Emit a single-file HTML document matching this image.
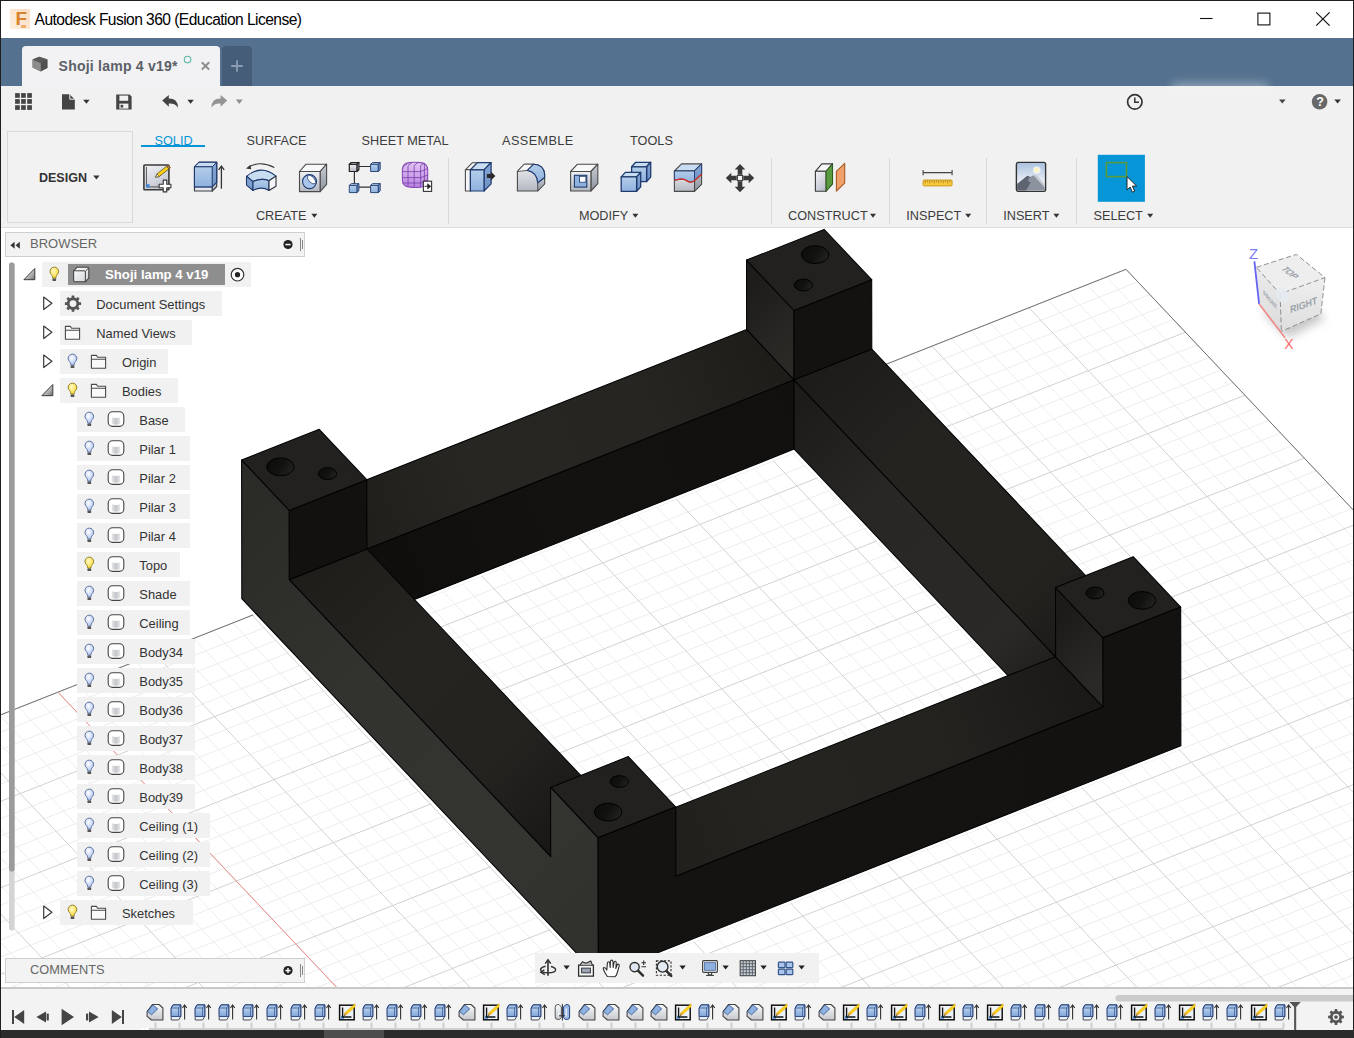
<!DOCTYPE html><html><head><meta charset="utf-8"><title>Autodesk Fusion 360 (Education License)</title><style>
*{box-sizing:border-box;margin:0;padding:0}
html,body{width:1354px;height:1038px;overflow:hidden;background:#fff}
body{font-family:"Liberation Sans",sans-serif;position:relative;color:#333}
.abs{position:absolute}
.t{position:absolute;white-space:nowrap;line-height:1}
#title{left:0;top:0;width:1354px;height:38px;background:#fff}
#tabbar{left:0;top:38px;width:1354px;height:48px;background:#54728f}
#tab{left:22px;top:8px;width:198px;height:40px;background:#f2f2f4;border-radius:4px 4px 0 0}
#plus{left:222px;top:8px;width:30px;height:40px;background:#455d79;border-radius:4px 4px 0 0}
#qat{left:0;top:86px;width:1354px;height:34px;background:#f1f1f1}
#ribbon{left:0;top:120px;width:1354px;height:108px;background:#f1f1f1;border-bottom:1px solid #dcdcdc}
.rt{font-size:12.7px;color:#3c3c3c}
.sep{position:absolute;top:158px;width:1px;height:66px;background:#d9d9d9}
#canvas{left:0;top:228px;width:1354px;height:759px;overflow:hidden;background:#fff}
.row{position:absolute;height:24px;background:#f1f1f1}
.rowt{position:absolute;font-size:12.9px;color:#333;white-space:nowrap;line-height:1}
.hdr{position:absolute;left:5px;width:300px;height:24px;background:#f3f3f3;border:1px solid #cfcfcf}
#timeline{left:0;top:987px;width:1354px;height:43px;background:#f3f3f3;border-top:2px solid #c8c8c8}
#taskbar{left:0;top:1030px;width:1354px;height:8px;background:#2b2b2b}
</style></head><body>
<div id="canvas" class="abs"><svg class="abs" style="left:0;top:-228px" width="1354" height="1038" viewBox="0 0 1354 1038">
<path d="M-1013.7 1133.8L1137.9 281.9M-1001.9 1146.4L1149.8 294.5M-990.0 1159.0L1161.7 307.1M-978.1 1171.6L1173.6 319.6M-954.3 1196.8L1197.3 344.8M-942.4 1209.4L1209.2 357.4M-930.5 1222.0L1221.1 370.0M-918.7 1234.6L1233.0 382.6M-894.9 1259.7L1256.8 407.8M-883.0 1272.3L1268.7 420.4M-871.1 1284.9L1280.5 433.0M-859.2 1297.5L1292.4 445.5M-835.5 1322.7L1316.2 470.7M-823.6 1335.3L1328.1 483.3M-811.7 1347.9L1340.0 495.9M-799.8 1360.5L1351.9 508.5M-776.0 1385.6L1375.6 533.7M-764.1 1398.2L1387.5 546.3M-752.2 1410.8L1399.4 558.9M-740.4 1423.4L1411.3 571.4M-716.6 1448.6L1435.1 596.6M-704.7 1461.2L1446.9 609.2M-692.8 1473.8L1458.8 621.8M-680.9 1486.3L1470.7 634.4M-657.2 1511.5L1494.5 659.6M-645.3 1524.1L1506.4 672.2M-633.4 1536.7L1518.3 684.8M-621.5 1549.3L1530.2 697.3M-597.7 1574.5L1553.9 722.5M-585.8 1587.1L1565.8 735.1M-573.9 1599.7L1577.7 747.7M-562.1 1612.2L1589.6 760.3M-538.3 1637.4L1613.4 785.5M-526.4 1650.0L1625.2 798.1M-514.5 1662.6L1637.1 810.7M-502.6 1675.2L1649.0 823.2M-478.9 1700.4L1672.8 848.4M-467.0 1713.0L1684.7 861.0M-455.1 1725.6L1696.6 873.6M-443.2 1738.1L1708.5 886.2M-419.4 1763.3L1732.2 911.4M-407.5 1775.9L1744.1 924.0M-395.7 1788.5L1756.0 936.6M-383.8 1801.1L1767.9 949.1M-360.0 1826.3L1791.7 974.3M-348.1 1838.9L1803.5 986.9M-336.2 1851.5L1815.4 999.5M-324.3 1864.0L1827.3 1012.1M-300.6 1889.2L1851.1 1037.3M-288.7 1901.8L1863.0 1049.9M-276.8 1914.4L1874.9 1062.4M-264.9 1927.0L1886.7 1075.0M-241.1 1952.2L1910.5 1100.2M-229.2 1964.8L1922.4 1112.8M-217.4 1977.4L1934.3 1125.4M-205.5 1989.9L1946.2 1138.0M-181.7 2015.1L1970.0 1163.2M-169.8 2027.7L1981.8 1175.8M-157.9 2040.3L1993.7 1188.3M-146.0 2052.9L2005.6 1200.9M-122.3 2078.1L2029.4 1226.1M-110.4 2090.7L2041.3 1238.7M-98.5 2103.3L2053.2 1251.3M-86.6 2115.8L2065.0 1263.9M-62.8 2141.0L2088.8 1289.1M-50.9 2153.6L2100.7 1301.7M1106.6 277.0L2090.8 1319.4M1087.2 284.7L2071.4 1327.1M1067.8 292.4L2052.0 1334.8M1048.3 300.0L2032.5 1342.5M1009.5 315.4L1993.7 1357.9M990.1 323.1L1974.3 1365.6M970.7 330.8L1954.9 1373.2M951.2 338.5L1935.4 1380.9M912.4 353.9L1896.6 1396.3M893.0 361.6L1877.2 1404.0M873.6 369.2L1857.8 1411.7M854.1 376.9L1838.3 1419.4M815.3 392.3L1799.5 1434.8M795.9 400.0L1780.1 1442.4M776.5 407.7L1760.7 1450.1M757.0 415.4L1741.2 1457.8M718.2 430.8L1702.4 1473.2M698.8 438.4L1683.0 1480.9M679.4 446.1L1663.6 1488.6M660.0 453.8L1644.2 1496.3M621.1 469.2L1605.3 1511.6M601.7 476.9L1585.9 1519.3M582.3 484.6L1566.5 1527.0M562.9 492.3L1547.1 1534.7M524.0 507.7L1508.2 1550.1M504.6 515.3L1488.8 1557.8M485.2 523.0L1469.4 1565.5M465.8 530.7L1450.0 1573.2M426.9 546.1L1411.1 1588.5M407.5 553.8L1391.7 1596.2M388.1 561.5L1372.3 1603.9M368.7 569.2L1352.9 1611.6M329.8 584.5L1314.0 1627.0M310.4 592.2L1294.6 1634.7M291.0 599.9L1275.2 1642.4M271.6 607.6L1255.8 1650.1M232.7 623.0L1216.9 1665.4M213.3 630.7L1197.5 1673.1M193.9 638.4L1178.1 1680.8M174.5 646.1L1158.7 1688.5M135.6 661.4L1119.8 1703.9M116.2 669.1L1100.4 1711.6M96.8 676.8L1081.0 1719.3M77.4 684.5L1061.6 1726.9M38.5 699.9L1022.7 1742.3M19.1 707.6L1003.3 1750.0M-0.3 715.3L983.9 1757.7M-19.7 722.9L964.5 1765.4M-58.6 738.3L925.6 1780.8M-78.0 746.0L906.2 1788.5M-97.4 753.7L886.8 1796.1M-116.8 761.4L867.4 1803.8M-155.7 776.8L828.5 1819.2M-175.1 784.5L809.1 1826.9M-194.5 792.1L789.7 1834.6M-213.9 799.8L770.3 1842.3M-252.8 815.2L731.4 1857.7M-272.2 822.9L712.0 1865.3M-291.6 830.6L692.6 1873.0M-311.0 838.3L673.2 1880.7M-349.8 853.7L634.4 1896.1M-369.3 861.4L614.9 1903.8M-388.7 869.0L595.5 1911.5M-408.1 876.7L576.1 1919.2M-446.9 892.1L537.3 1934.5M-466.4 899.8L517.8 1942.2M-485.8 907.5L498.4 1949.9M-505.2 915.2L479.0 1957.6M-544.0 930.6L440.2 1973.0M-563.5 938.2L420.7 1980.7M-582.9 945.9L401.3 1988.4M-602.3 953.6L381.9 1996.1M-641.1 969.0L343.1 2011.4M-660.6 976.7L323.6 2019.1M-680.0 984.4L304.2 2026.8M-699.4 992.1L284.8 2034.5M-738.2 1007.4L246.0 2049.9M-757.6 1015.1L226.5 2057.6M-777.1 1022.8L207.1 2065.3M-796.5 1030.5L187.7 2073.0M-835.3 1045.9L148.9 2088.3M-854.7 1053.6L129.5 2096.0M-874.2 1061.3L110.0 2103.7M-893.6 1069.0L90.6 2111.4M-932.4 1084.3L51.8 2126.8M-951.8 1092.0L32.4 2134.5M-971.3 1099.7L12.9 2142.2M-990.7 1107.4L-6.5 2149.8" stroke="#ededed" stroke-width="1" fill="none"/>
<path d="M-1025.6 1121.2L1126.0 269.3M-966.2 1184.2L1185.4 332.2M-906.8 1247.1L1244.9 395.2M-847.3 1310.1L1304.3 458.1M-787.9 1373.0L1363.7 521.1M-728.5 1436.0L1423.2 584.0M-669.0 1498.9L1482.6 647.0M-609.6 1561.9L1542.0 709.9M-550.2 1624.8L1601.5 772.9M-490.7 1687.8L1660.9 835.8M-431.3 1750.7L1720.3 898.8M-371.9 1813.7L1779.8 961.7M-312.4 1876.6L1839.2 1024.7M-253.0 1939.6L1898.6 1087.6M-193.6 2002.5L1958.1 1150.6M-134.2 2065.5L2017.5 1213.5M-74.7 2128.4L2076.9 1276.5M1126.0 269.3L2110.2 1311.7M1028.9 307.7L2013.1 1350.2M931.8 346.2L1916.0 1388.6M834.7 384.6L1818.9 1427.1M737.6 423.1L1721.8 1465.5M640.5 461.5L1624.7 1504.0M543.4 500.0L1527.6 1542.4M446.3 538.4L1430.5 1580.8M349.2 576.9L1333.4 1619.3M252.1 615.3L1236.3 1657.7M155.1 653.7L1139.3 1696.2M58.0 692.2L1042.2 1734.6M-39.1 730.6L945.1 1773.1M-136.2 769.1L848.0 1811.5M-233.3 807.5L750.9 1850.0M-330.4 846.0L653.8 1888.4M-427.5 884.4L556.7 1926.9M-524.6 922.9L459.6 1965.3M-621.7 961.3L362.5 2003.8M-718.8 999.8L265.4 2042.2M-815.9 1038.2L168.3 2080.6M-913.0 1076.6L71.2 2119.1M-1010.1 1115.1L-25.9 2157.5" stroke="#d2d2d2" stroke-width="1" fill="none"/>
<path d="M-1025.6 1121.2L1126.0 269.3L2110.2 1311.7" stroke="#747474" stroke-width="1" fill="none"/>
<path d="M58.0 692.2L1042.2 1734.6" stroke="#f08c8c" stroke-width="1" fill="none"/>
<defs><linearGradient id="gOL" gradientUnits="userSpaceOnUse" x1="241.7" y1="529.4" x2="598.3" y2="907.1"><stop offset="0" stop-color="#2b2b28"/><stop offset="0.35" stop-color="#32322f"/><stop offset="0.8" stop-color="#343431"/><stop offset="1" stop-color="#31312e"/></linearGradient><linearGradient id="gOR" gradientUnits="userSpaceOnUse" x1="598.3" y1="907.1" x2="1180.8" y2="676.4"><stop offset="0" stop-color="#141311"/><stop offset="1" stop-color="#131210"/></linearGradient><linearGradient id="gInA" gradientUnits="userSpaceOnUse" x1="366.9" y1="583.6" x2="794.2" y2="414.4"><stop offset="0" stop-color="#0f0e0d"/><stop offset="0.5" stop-color="#131211"/><stop offset="1" stop-color="#11100f"/></linearGradient><linearGradient id="gInB" gradientUnits="userSpaceOnUse" x1="794.2" y1="414.4" x2="1055.7" y2="691.4"><stop offset="0" stop-color="#1d1c1a"/><stop offset="0.3" stop-color="#282725"/><stop offset="0.8" stop-color="#2a2927"/><stop offset="1" stop-color="#1c1b19"/></linearGradient><linearGradient id="gTopLB" gradientUnits="userSpaceOnUse" x1="343.1" y1="523.8" x2="770.3" y2="354.6"><stop offset="0" stop-color="#1f1e1b"/><stop offset="0.3" stop-color="#272623"/><stop offset="0.7" stop-color="#262522"/><stop offset="1" stop-color="#1e1d1a"/></linearGradient><linearGradient id="gTopBR" gradientUnits="userSpaceOnUse" x1="832.9" y1="364.4" x2="1094.4" y2="641.4"><stop offset="0" stop-color="#1d1c1a"/><stop offset="0.3" stop-color="#242320"/><stop offset="0.8" stop-color="#23221f"/><stop offset="1" stop-color="#191816"/></linearGradient><linearGradient id="gTopRF" gradientUnits="userSpaceOnUse" x1="1079.4" y1="682.0" x2="652.2" y2="851.1"><stop offset="0" stop-color="#1a1917"/><stop offset="0.3" stop-color="#23221f"/><stop offset="0.7" stop-color="#252421"/><stop offset="1" stop-color="#201f1c"/></linearGradient><linearGradient id="gTopFL" gradientUnits="userSpaceOnUse" x1="328.0" y1="564.3" x2="589.5" y2="841.3"><stop offset="0" stop-color="#1f1e1b"/><stop offset="0.3" stop-color="#252421"/><stop offset="0.7" stop-color="#23221f"/><stop offset="1" stop-color="#161514"/></linearGradient><linearGradient id="gPv" gradientUnits="userSpaceOnUse" x1="746.5" y1="294.8" x2="794.1" y2="345.1"><stop offset="0" stop-color="#1e1d1b"/><stop offset="1" stop-color="#2a2926"/></linearGradient><linearGradient id="gPvR" gradientUnits="userSpaceOnUse" x1="1055.6" y1="622.1" x2="1103.1" y2="672.5"><stop offset="0" stop-color="#1c1b19"/><stop offset="1" stop-color="#2a2927"/></linearGradient><linearGradient id="gHole" x1="0" y1="0.2" x2="1" y2="0.6"><stop offset="0" stop-color="#0c0c0b"/><stop offset="0.55" stop-color="#121211"/><stop offset="0.85" stop-color="#1d1d1b"/><stop offset="1" stop-color="#232321"/></linearGradient></defs>
<polygon points="241.8,598.7 598.4,976.3 1180.9,745.7 824.3,368.0" fill="none" stroke="#fff" stroke-opacity="0.85" stroke-width="6" stroke-linejoin="round"/>
<polygon points="367.0,618.3 628.5,895.2 1055.7,726.1 794.2,449.1" fill="none" stroke="#fff" stroke-opacity="0.85" stroke-width="6" stroke-linejoin="round"/>
<polygon points="366.9,549.0 794.1,379.8 794.2,449.1 367.0,618.3" fill="url(#gInA)" stroke="#020202" stroke-width="1.05" stroke-linejoin="round"/>
<polygon points="794.1,379.8 1055.6,656.8 1055.7,726.1 794.2,449.1" fill="url(#gInB)" stroke="#020202" stroke-width="1.05" stroke-linejoin="round"/>
<polygon points="319.3,498.6 746.6,329.4 794.1,379.8 366.9,549.0" fill="url(#gTopLB)" stroke="#020202" stroke-width="1.05" stroke-linejoin="round"/>
<polygon points="794.1,379.8 871.8,349.0 1133.3,626.0 1055.6,656.8" fill="url(#gTopBR)" stroke="#020202" stroke-width="1.05" stroke-linejoin="round"/>
<polygon points="1055.6,656.8 1103.2,707.1 675.9,876.3 628.4,825.9" fill="url(#gTopRF)" stroke="#020202" stroke-width="1.05" stroke-linejoin="round"/>
<polygon points="289.2,579.7 366.9,549.0 628.4,825.9 550.7,856.7" fill="url(#gTopFL)" stroke="#020202" stroke-width="1.05" stroke-linejoin="round"/>
<polygon points="746.5,260.1 794.0,310.5 794.1,379.8 746.6,329.4" fill="url(#gPv)" stroke="#020202" stroke-width="1.05" stroke-linejoin="round"/>
<polygon points="794.0,310.5 871.7,279.7 871.8,349.0 794.1,379.8" fill="#131210" stroke="#020202" stroke-width="1.05" stroke-linejoin="round"/>
<polygon points="746.5,260.1 824.1,229.4 871.7,279.7 794.0,310.5" fill="#22211f" stroke="#020202" stroke-width="1.05" stroke-linejoin="round"/>
<polygon points="289.1,510.4 366.8,479.7 366.9,549.0 289.2,579.7" fill="#121110" stroke="#020202" stroke-width="1.05" stroke-linejoin="round"/>
<polygon points="241.6,460.1 319.2,429.3 366.8,479.7 289.1,510.4" fill="#22211f" stroke="#020202" stroke-width="1.05" stroke-linejoin="round"/>
<polygon points="1055.5,587.5 1103.0,637.8 1103.2,707.1 1055.6,656.8" fill="url(#gPvR)" stroke="#020202" stroke-width="1.05" stroke-linejoin="round"/>
<polygon points="1055.5,587.5 1133.2,556.7 1180.7,607.1 1103.0,637.8" fill="#22211f" stroke="#020202" stroke-width="1.05" stroke-linejoin="round"/>
<polygon points="550.6,787.4 628.3,756.6 675.8,807.0 598.1,837.8" fill="#22211f" stroke="#020202" stroke-width="1.05" stroke-linejoin="round"/>
<polygon points="241.8,598.7 241.6,460.1 289.1,510.4 289.2,579.7 550.7,856.7 550.6,787.4 598.1,837.8 598.4,976.3" fill="url(#gOL)" stroke="#020202" stroke-width="1.05" stroke-linejoin="round"/>
<polygon points="598.4,976.3 598.1,837.8 675.8,807.0 675.9,876.3 1103.2,707.1 1103.0,637.8 1180.7,607.1 1180.9,745.7" fill="url(#gOR)" stroke="#020202" stroke-width="1.05" stroke-linejoin="round"/>
<ellipse cx="280.4" cy="466.8" rx="13.7" ry="8.9" fill="url(#gHole)" stroke="#000" stroke-width="1"/>
<ellipse cx="327.5" cy="473.6" rx="9.1" ry="5.9" fill="url(#gHole)" stroke="#000" stroke-width="1"/>
<ellipse cx="815.1" cy="254.6" rx="13.7" ry="8.9" fill="url(#gHole)" stroke="#000" stroke-width="1"/>
<ellipse cx="803.4" cy="285.0" rx="9.1" ry="5.9" fill="url(#gHole)" stroke="#000" stroke-width="1"/>
<ellipse cx="1094.9" cy="593.0" rx="9.1" ry="5.9" fill="url(#gHole)" stroke="#000" stroke-width="1"/>
<ellipse cx="1142.0" cy="600.4" rx="13.7" ry="8.9" fill="url(#gHole)" stroke="#000" stroke-width="1"/>
<ellipse cx="619.3" cy="781.5" rx="9.1" ry="5.9" fill="url(#gHole)" stroke="#000" stroke-width="1"/>
<ellipse cx="608.1" cy="812.1" rx="13.7" ry="8.9" fill="url(#gHole)" stroke="#000" stroke-width="1"/>
<defs><filter id="cbl" x="-50%" y="-50%" width="200%" height="200%"><feGaussianBlur stdDeviation="5"/></filter><linearGradient id="cgR" x1="0" y1="0" x2="0" y2="1"><stop offset="0" stop-color="#efefef"/><stop offset="1" stop-color="#dedede"/></linearGradient><linearGradient id="cgL" x1="0" y1="0" x2="0" y2="1"><stop offset="0" stop-color="#ebebeb"/><stop offset="1" stop-color="#dcdcdc"/></linearGradient></defs>
<polygon points="1262.0,312.0 1300.0,300.0 1326.0,318.0 1288.0,338.0" fill="#9a9a9a" opacity="0.55" filter="url(#cbl)"/>
<polygon points="1256.3,267.3 1296.4,254.4 1325.0,277.6 1280.1,293.9" fill="#eeeeee"/>
<polygon points="1256.3,267.3 1280.1,293.9 1281.4,331.4 1259.1,303.9" fill="url(#cgL)"/>
<polygon points="1280.1,293.9 1325.0,277.6 1320.8,313.9 1281.4,331.4" fill="url(#cgR)"/>
<path d="M1256.3 267.3L1296.4 254.4L1325.0 277.6L1280.1 293.9Z M1280.1 293.9L1281.4 331.4 M1325.0 277.6L1320.8 313.9L1281.4 331.4" stroke="#858585" stroke-width="0.9" stroke-dasharray="5.2 2.6" fill="none"/>
<polygon points="1276.0,290.5 1283.5,287.5 1288.5,293.0 1288.0,300.0 1281.0,302.5 1276.5,297.0" fill="#e6eaf2" opacity="0.9"/>
<text transform="matrix(0.2860 0.2320 -0.4010 0.1290 1296.40 254.40)" x="50" y="60" font-size="25" textLength="44" lengthAdjust="spacingAndGlyphs" font-weight="bold" fill="#9ca1aa" text-anchor="middle" font-family="Liberation Sans, sans-serif">TOP</text>
<text transform="matrix(0.4490 -0.1630 0.0130 0.3750 1280.10 293.90)" x="51" y="61" font-size="27" textLength="60" lengthAdjust="spacingAndGlyphs" font-weight="bold" fill="#9ca1aa" text-anchor="middle" font-family="Liberation Sans, sans-serif">RIGHT</text>
<text transform="matrix(0.2380 0.2660 0.0280 0.3660 1256.30 267.30)" x="52" y="60" font-size="22" textLength="58" lengthAdjust="spacingAndGlyphs" font-weight="bold" fill="#9ca1aa" text-anchor="middle" font-family="Liberation Sans, sans-serif">FRONT</text>
<path d="M1254.4 261.3L1259.1 303.9" stroke="#6464f5" stroke-width="1.8"/>
<path d="M1259.1 303.9L1285.1 337.7" stroke="#f08a8a" stroke-width="1.6"/>
<text x="1253.6" y="259" font-size="15" fill="#7a7af8" text-anchor="middle" font-family="Liberation Sans, sans-serif">Z</text>
<text x="1288.9" y="348.5" font-size="14" fill="#f86a6a" text-anchor="middle" font-family="Liberation Sans, sans-serif">X</text>
</svg></div>
<div class="hdr" style="top:232px;height:25px"></div>
<div class="t" style="left:30px;top:237.4px;font-size:13px;color:#666">BROWSER</div>
<div class="hdr" style="top:958px;height:25px"></div>
<div class="t" style="left:30px;top:963.6px;font-size:12.8px;color:#666">COMMENTS</div>
<div class="row" style="left:42px;top:262px;width:209px;height:24.5px"></div>
<div class="abs" style="left:68px;top:264.2px;width:157px;height:20.6px;background:#8e8e8e"></div>
<div class="rowt" style="left:105px;top:263.4px;line-height:24.5px;font-weight:bold;color:#fff;font-size:13.2px;">Shoji lamp 4 v19</div>
<div class="row" style="left:60px;top:291px;width:162px;height:24.5px"></div>
<div class="rowt" style="left:96.3px;top:293px;line-height:24.5px;">Document Settings</div>
<div class="row" style="left:60px;top:320px;width:132px;height:24.5px"></div>
<div class="rowt" style="left:96.3px;top:322px;line-height:24.5px;">Named Views</div>
<div class="row" style="left:60px;top:349px;width:108px;height:24.5px"></div>
<div class="rowt" style="left:122px;top:351px;line-height:24.5px;">Origin</div>
<div class="row" style="left:60px;top:378px;width:118px;height:24.5px"></div>
<div class="rowt" style="left:122px;top:380px;line-height:24.5px;">Bodies</div>
<div class="row" style="left:77px;top:407px;width:108px;height:24.5px"></div>
<div class="rowt" style="left:139.3px;top:409px;line-height:24.5px;">Base</div>
<div class="row" style="left:77px;top:436px;width:113px;height:24.5px"></div>
<div class="rowt" style="left:139.3px;top:438px;line-height:24.5px;">Pilar 1</div>
<div class="row" style="left:77px;top:465px;width:113px;height:24.5px"></div>
<div class="rowt" style="left:139.3px;top:467px;line-height:24.5px;">Pilar 2</div>
<div class="row" style="left:77px;top:494px;width:113px;height:24.5px"></div>
<div class="rowt" style="left:139.3px;top:496px;line-height:24.5px;">Pilar 3</div>
<div class="row" style="left:77px;top:523px;width:113px;height:24.5px"></div>
<div class="rowt" style="left:139.3px;top:525px;line-height:24.5px;">Pilar 4</div>
<div class="row" style="left:77px;top:552px;width:103px;height:24.5px"></div>
<div class="rowt" style="left:139.3px;top:554px;line-height:24.5px;">Topo</div>
<div class="row" style="left:77px;top:581px;width:113px;height:24.5px"></div>
<div class="rowt" style="left:139.3px;top:583px;line-height:24.5px;">Shade</div>
<div class="row" style="left:77px;top:610px;width:113px;height:24.5px"></div>
<div class="rowt" style="left:139.3px;top:612px;line-height:24.5px;">Ceiling</div>
<div class="row" style="left:77px;top:639px;width:118px;height:24.5px"></div>
<div class="rowt" style="left:139.3px;top:641px;line-height:24.5px;">Body34</div>
<div class="row" style="left:77px;top:668px;width:118px;height:24.5px"></div>
<div class="rowt" style="left:139.3px;top:670px;line-height:24.5px;">Body35</div>
<div class="row" style="left:77px;top:697px;width:118px;height:24.5px"></div>
<div class="rowt" style="left:139.3px;top:699px;line-height:24.5px;">Body36</div>
<div class="row" style="left:77px;top:726px;width:118px;height:24.5px"></div>
<div class="rowt" style="left:139.3px;top:728px;line-height:24.5px;">Body37</div>
<div class="row" style="left:77px;top:755px;width:118px;height:24.5px"></div>
<div class="rowt" style="left:139.3px;top:757px;line-height:24.5px;">Body38</div>
<div class="row" style="left:77px;top:784px;width:118px;height:24.5px"></div>
<div class="rowt" style="left:139.3px;top:786px;line-height:24.5px;">Body39</div>
<div class="row" style="left:77px;top:813px;width:132.5px;height:24.5px"></div>
<div class="rowt" style="left:139.3px;top:815px;line-height:24.5px;">Ceiling (1)</div>
<div class="row" style="left:77px;top:842px;width:132.5px;height:24.5px"></div>
<div class="rowt" style="left:139.3px;top:844px;line-height:24.5px;">Ceiling (2)</div>
<div class="row" style="left:77px;top:871px;width:132.5px;height:24.5px"></div>
<div class="rowt" style="left:139.3px;top:873px;line-height:24.5px;">Ceiling (3)</div>
<div class="row" style="left:60px;top:900px;width:133px;height:24.5px"></div>
<div class="rowt" style="left:122px;top:902px;line-height:24.5px;">Sketches</div>
<svg class="abs" style="left:0;top:0;pointer-events:none" width="320" height="1038" viewBox="0 0 320 1038">
<defs><radialGradient id="bulbY" cx="0.4" cy="0.35" r="0.7"><stop offset="0" stop-color="#fff9c8"/><stop offset="1" stop-color="#ffd92e"/></radialGradient><radialGradient id="bulbB" cx="0.4" cy="0.35" r="0.7"><stop offset="0" stop-color="#ffffff"/><stop offset="1" stop-color="#a9c2f5"/></radialGradient><linearGradient id="bodyG" x1="0" y1="0" x2="1" y2="0"><stop offset="0" stop-color="#e6e6e6"/><stop offset="0.5" stop-color="#c2c5ca"/><stop offset="1" stop-color="#e9e9e9"/></linearGradient><linearGradient id="bodyG2" x1="0" y1="0" x2="1" y2="1"><stop offset="0" stop-color="#ffffff"/><stop offset="1" stop-color="#cfd1d4"/></linearGradient><linearGradient id="triG" x1="0" y1="0" x2="1" y2="1"><stop offset="0.3" stop-color="#e8e8e8"/><stop offset="1" stop-color="#6e6e6e"/></linearGradient></defs>
<path d="M34.8 268.5 L34.8 279.7 L23.9 279.7 Z" fill="url(#triG)" stroke="#3a3a3a" stroke-width="1" stroke-linejoin="round"/>
<g><path d="M51.5 274.7 a4.3 4.3 0 1 1 5.6 0 c-1 1 -1.1 2.2 -1.1 3.4 h-3.4 c0 -1.2 -0.1 -2.4 -1.1 -3.4z" fill="url(#bulbY)" stroke="#8a7a20" stroke-width="0.95"/><rect x="52.5" y="278.5" width="3.6" height="2.6" rx="0.7" fill="#555"/></g>
<path d="M73.6 270.8 l3.6 -3.6 h10 q1.6 0 1.6 1.6 v9.4 l-3.6 3.6 h-10 q-1.6 0 -1.6 -1.6z" fill="url(#bodyG2)" stroke="#444" stroke-width="1.1" stroke-linejoin="round"/><path d="M73.6 270.8 h10.6 q1.2 0 1.2 1.2 v10.2 M85.4 271.2 l3.4 -3.4" fill="none" stroke="#444" stroke-width="1"/>
<path d="M43.7 297.1 L51.9 303.3 L43.7 309.5 Z" fill="#fff" stroke="#3a3a3a" stroke-width="1.2" stroke-linejoin="round"/>
<path d="M79.06 302.15L81.10 302.32L81.10 304.88L79.06 305.05L78.31 306.86L79.63 308.42L77.82 310.23L76.26 308.91L74.45 309.66L74.28 311.70L71.72 311.70L71.55 309.66L69.74 308.91L68.18 310.23L66.37 308.42L67.69 306.86L66.94 305.05L64.90 304.88L64.90 302.32L66.94 302.15L67.69 300.34L66.37 298.78L68.18 296.97L69.74 298.29L71.55 297.54L71.72 295.50L74.28 295.50L74.45 297.54L76.26 298.29L77.82 296.97L79.63 298.78L78.31 300.34Z" fill="#555"/><circle cx="73.0" cy="303.6" r="3.40" fill="#f1f1f1"/>
<path d="M43.7 326.1 L51.9 332.3 L43.7 338.5 Z" fill="#fff" stroke="#3a3a3a" stroke-width="1.2" stroke-linejoin="round"/>
<path d="M65.4 326.4 h5 l1.2 1.8 h8 v11 h-14.2z M65.4 330.2 h14.2" fill="#fafafa" stroke="#4a4a4a" stroke-width="1.1" stroke-linejoin="round"/>
<path d="M43.7 355.1 L51.9 361.3 L43.7 367.5 Z" fill="#fff" stroke="#3a3a3a" stroke-width="1.2" stroke-linejoin="round"/>
<g><path d="M69.7 361.7 a4.3 4.3 0 1 1 5.6 0 c-1 1 -1.1 2.2 -1.1 3.4 h-3.4 c0 -1.2 -0.1 -2.4 -1.1 -3.4z" fill="url(#bulbB)" stroke="#5a6c98" stroke-width="0.95"/><rect x="70.7" y="365.5" width="3.6" height="2.6" rx="0.7" fill="#555"/></g>
<path d="M91.4 355.4 h5 l1.2 1.8 h8 v11 h-14.2z M91.4 359.2 h14.2" fill="#fafafa" stroke="#4a4a4a" stroke-width="1.1" stroke-linejoin="round"/>
<path d="M52.8 384.5 L52.8 395.7 L41.9 395.7 Z" fill="url(#triG)" stroke="#3a3a3a" stroke-width="1" stroke-linejoin="round"/>
<g><path d="M69.7 390.7 a4.3 4.3 0 1 1 5.6 0 c-1 1 -1.1 2.2 -1.1 3.4 h-3.4 c0 -1.2 -0.1 -2.4 -1.1 -3.4z" fill="url(#bulbY)" stroke="#8a7a20" stroke-width="0.95"/><rect x="70.7" y="394.5" width="3.6" height="2.6" rx="0.7" fill="#555"/></g>
<path d="M91.4 384.4 h5 l1.2 1.8 h8 v11 h-14.2z M91.4 388.2 h14.2" fill="#fafafa" stroke="#4a4a4a" stroke-width="1.1" stroke-linejoin="round"/>
<g><path d="M86.5 419.7 a4.3 4.3 0 1 1 5.6 0 c-1 1 -1.1 2.2 -1.1 3.4 h-3.4 c0 -1.2 -0.1 -2.4 -1.1 -3.4z" fill="url(#bulbB)" stroke="#5a6c98" stroke-width="0.95"/><rect x="87.5" y="423.5" width="3.6" height="2.6" rx="0.7" fill="#555"/></g>
<rect x="108.2" y="411.8" width="15.6" height="14.6" rx="4.4" ry="4.4" fill="#fff" stroke="#444" stroke-width="1.1"/><path d="M111.8 417.2 q4.2 1.6 8.4 0 v6.8 q-4.2 1.6 -8.4 0z" fill="url(#bodyG)"/>
<g><path d="M86.5 448.7 a4.3 4.3 0 1 1 5.6 0 c-1 1 -1.1 2.2 -1.1 3.4 h-3.4 c0 -1.2 -0.1 -2.4 -1.1 -3.4z" fill="url(#bulbB)" stroke="#5a6c98" stroke-width="0.95"/><rect x="87.5" y="452.5" width="3.6" height="2.6" rx="0.7" fill="#555"/></g>
<rect x="108.2" y="440.8" width="15.6" height="14.6" rx="4.4" ry="4.4" fill="#fff" stroke="#444" stroke-width="1.1"/><path d="M111.8 446.2 q4.2 1.6 8.4 0 v6.8 q-4.2 1.6 -8.4 0z" fill="url(#bodyG)"/>
<g><path d="M86.5 477.7 a4.3 4.3 0 1 1 5.6 0 c-1 1 -1.1 2.2 -1.1 3.4 h-3.4 c0 -1.2 -0.1 -2.4 -1.1 -3.4z" fill="url(#bulbB)" stroke="#5a6c98" stroke-width="0.95"/><rect x="87.5" y="481.5" width="3.6" height="2.6" rx="0.7" fill="#555"/></g>
<rect x="108.2" y="469.8" width="15.6" height="14.6" rx="4.4" ry="4.4" fill="#fff" stroke="#444" stroke-width="1.1"/><path d="M111.8 475.2 q4.2 1.6 8.4 0 v6.8 q-4.2 1.6 -8.4 0z" fill="url(#bodyG)"/>
<g><path d="M86.5 506.7 a4.3 4.3 0 1 1 5.6 0 c-1 1 -1.1 2.2 -1.1 3.4 h-3.4 c0 -1.2 -0.1 -2.4 -1.1 -3.4z" fill="url(#bulbB)" stroke="#5a6c98" stroke-width="0.95"/><rect x="87.5" y="510.5" width="3.6" height="2.6" rx="0.7" fill="#555"/></g>
<rect x="108.2" y="498.8" width="15.6" height="14.6" rx="4.4" ry="4.4" fill="#fff" stroke="#444" stroke-width="1.1"/><path d="M111.8 504.2 q4.2 1.6 8.4 0 v6.8 q-4.2 1.6 -8.4 0z" fill="url(#bodyG)"/>
<g><path d="M86.5 535.7 a4.3 4.3 0 1 1 5.6 0 c-1 1 -1.1 2.2 -1.1 3.4 h-3.4 c0 -1.2 -0.1 -2.4 -1.1 -3.4z" fill="url(#bulbB)" stroke="#5a6c98" stroke-width="0.95"/><rect x="87.5" y="539.5" width="3.6" height="2.6" rx="0.7" fill="#555"/></g>
<rect x="108.2" y="527.8" width="15.6" height="14.6" rx="4.4" ry="4.4" fill="#fff" stroke="#444" stroke-width="1.1"/><path d="M111.8 533.2 q4.2 1.6 8.4 0 v6.8 q-4.2 1.6 -8.4 0z" fill="url(#bodyG)"/>
<g><path d="M86.5 564.7 a4.3 4.3 0 1 1 5.6 0 c-1 1 -1.1 2.2 -1.1 3.4 h-3.4 c0 -1.2 -0.1 -2.4 -1.1 -3.4z" fill="url(#bulbY)" stroke="#8a7a20" stroke-width="0.95"/><rect x="87.5" y="568.5" width="3.6" height="2.6" rx="0.7" fill="#555"/></g>
<rect x="108.2" y="556.8" width="15.6" height="14.6" rx="4.4" ry="4.4" fill="#fff" stroke="#444" stroke-width="1.1"/><path d="M111.8 562.2 q4.2 1.6 8.4 0 v6.8 q-4.2 1.6 -8.4 0z" fill="url(#bodyG)"/>
<g><path d="M86.5 593.7 a4.3 4.3 0 1 1 5.6 0 c-1 1 -1.1 2.2 -1.1 3.4 h-3.4 c0 -1.2 -0.1 -2.4 -1.1 -3.4z" fill="url(#bulbB)" stroke="#5a6c98" stroke-width="0.95"/><rect x="87.5" y="597.5" width="3.6" height="2.6" rx="0.7" fill="#555"/></g>
<rect x="108.2" y="585.8" width="15.6" height="14.6" rx="4.4" ry="4.4" fill="#fff" stroke="#444" stroke-width="1.1"/><path d="M111.8 591.2 q4.2 1.6 8.4 0 v6.8 q-4.2 1.6 -8.4 0z" fill="url(#bodyG)"/>
<g><path d="M86.5 622.7 a4.3 4.3 0 1 1 5.6 0 c-1 1 -1.1 2.2 -1.1 3.4 h-3.4 c0 -1.2 -0.1 -2.4 -1.1 -3.4z" fill="url(#bulbB)" stroke="#5a6c98" stroke-width="0.95"/><rect x="87.5" y="626.5" width="3.6" height="2.6" rx="0.7" fill="#555"/></g>
<rect x="108.2" y="614.8" width="15.6" height="14.6" rx="4.4" ry="4.4" fill="#fff" stroke="#444" stroke-width="1.1"/><path d="M111.8 620.2 q4.2 1.6 8.4 0 v6.8 q-4.2 1.6 -8.4 0z" fill="url(#bodyG)"/>
<g><path d="M86.5 651.7 a4.3 4.3 0 1 1 5.6 0 c-1 1 -1.1 2.2 -1.1 3.4 h-3.4 c0 -1.2 -0.1 -2.4 -1.1 -3.4z" fill="url(#bulbB)" stroke="#5a6c98" stroke-width="0.95"/><rect x="87.5" y="655.5" width="3.6" height="2.6" rx="0.7" fill="#555"/></g>
<rect x="108.2" y="643.8" width="15.6" height="14.6" rx="4.4" ry="4.4" fill="#fff" stroke="#444" stroke-width="1.1"/><path d="M111.8 649.2 q4.2 1.6 8.4 0 v6.8 q-4.2 1.6 -8.4 0z" fill="url(#bodyG)"/>
<g><path d="M86.5 680.7 a4.3 4.3 0 1 1 5.6 0 c-1 1 -1.1 2.2 -1.1 3.4 h-3.4 c0 -1.2 -0.1 -2.4 -1.1 -3.4z" fill="url(#bulbB)" stroke="#5a6c98" stroke-width="0.95"/><rect x="87.5" y="684.5" width="3.6" height="2.6" rx="0.7" fill="#555"/></g>
<rect x="108.2" y="672.8" width="15.6" height="14.6" rx="4.4" ry="4.4" fill="#fff" stroke="#444" stroke-width="1.1"/><path d="M111.8 678.2 q4.2 1.6 8.4 0 v6.8 q-4.2 1.6 -8.4 0z" fill="url(#bodyG)"/>
<g><path d="M86.5 709.7 a4.3 4.3 0 1 1 5.6 0 c-1 1 -1.1 2.2 -1.1 3.4 h-3.4 c0 -1.2 -0.1 -2.4 -1.1 -3.4z" fill="url(#bulbB)" stroke="#5a6c98" stroke-width="0.95"/><rect x="87.5" y="713.5" width="3.6" height="2.6" rx="0.7" fill="#555"/></g>
<rect x="108.2" y="701.8" width="15.6" height="14.6" rx="4.4" ry="4.4" fill="#fff" stroke="#444" stroke-width="1.1"/><path d="M111.8 707.2 q4.2 1.6 8.4 0 v6.8 q-4.2 1.6 -8.4 0z" fill="url(#bodyG)"/>
<g><path d="M86.5 738.7 a4.3 4.3 0 1 1 5.6 0 c-1 1 -1.1 2.2 -1.1 3.4 h-3.4 c0 -1.2 -0.1 -2.4 -1.1 -3.4z" fill="url(#bulbB)" stroke="#5a6c98" stroke-width="0.95"/><rect x="87.5" y="742.5" width="3.6" height="2.6" rx="0.7" fill="#555"/></g>
<rect x="108.2" y="730.8" width="15.6" height="14.6" rx="4.4" ry="4.4" fill="#fff" stroke="#444" stroke-width="1.1"/><path d="M111.8 736.2 q4.2 1.6 8.4 0 v6.8 q-4.2 1.6 -8.4 0z" fill="url(#bodyG)"/>
<g><path d="M86.5 767.7 a4.3 4.3 0 1 1 5.6 0 c-1 1 -1.1 2.2 -1.1 3.4 h-3.4 c0 -1.2 -0.1 -2.4 -1.1 -3.4z" fill="url(#bulbB)" stroke="#5a6c98" stroke-width="0.95"/><rect x="87.5" y="771.5" width="3.6" height="2.6" rx="0.7" fill="#555"/></g>
<rect x="108.2" y="759.8" width="15.6" height="14.6" rx="4.4" ry="4.4" fill="#fff" stroke="#444" stroke-width="1.1"/><path d="M111.8 765.2 q4.2 1.6 8.4 0 v6.8 q-4.2 1.6 -8.4 0z" fill="url(#bodyG)"/>
<g><path d="M86.5 796.7 a4.3 4.3 0 1 1 5.6 0 c-1 1 -1.1 2.2 -1.1 3.4 h-3.4 c0 -1.2 -0.1 -2.4 -1.1 -3.4z" fill="url(#bulbB)" stroke="#5a6c98" stroke-width="0.95"/><rect x="87.5" y="800.5" width="3.6" height="2.6" rx="0.7" fill="#555"/></g>
<rect x="108.2" y="788.8" width="15.6" height="14.6" rx="4.4" ry="4.4" fill="#fff" stroke="#444" stroke-width="1.1"/><path d="M111.8 794.2 q4.2 1.6 8.4 0 v6.8 q-4.2 1.6 -8.4 0z" fill="url(#bodyG)"/>
<g><path d="M86.5 825.7 a4.3 4.3 0 1 1 5.6 0 c-1 1 -1.1 2.2 -1.1 3.4 h-3.4 c0 -1.2 -0.1 -2.4 -1.1 -3.4z" fill="url(#bulbB)" stroke="#5a6c98" stroke-width="0.95"/><rect x="87.5" y="829.5" width="3.6" height="2.6" rx="0.7" fill="#555"/></g>
<rect x="108.2" y="817.8" width="15.6" height="14.6" rx="4.4" ry="4.4" fill="#fff" stroke="#444" stroke-width="1.1"/><path d="M111.8 823.2 q4.2 1.6 8.4 0 v6.8 q-4.2 1.6 -8.4 0z" fill="url(#bodyG)"/>
<g><path d="M86.5 854.7 a4.3 4.3 0 1 1 5.6 0 c-1 1 -1.1 2.2 -1.1 3.4 h-3.4 c0 -1.2 -0.1 -2.4 -1.1 -3.4z" fill="url(#bulbB)" stroke="#5a6c98" stroke-width="0.95"/><rect x="87.5" y="858.5" width="3.6" height="2.6" rx="0.7" fill="#555"/></g>
<rect x="108.2" y="846.8" width="15.6" height="14.6" rx="4.4" ry="4.4" fill="#fff" stroke="#444" stroke-width="1.1"/><path d="M111.8 852.2 q4.2 1.6 8.4 0 v6.8 q-4.2 1.6 -8.4 0z" fill="url(#bodyG)"/>
<g><path d="M86.5 883.7 a4.3 4.3 0 1 1 5.6 0 c-1 1 -1.1 2.2 -1.1 3.4 h-3.4 c0 -1.2 -0.1 -2.4 -1.1 -3.4z" fill="url(#bulbB)" stroke="#5a6c98" stroke-width="0.95"/><rect x="87.5" y="887.5" width="3.6" height="2.6" rx="0.7" fill="#555"/></g>
<rect x="108.2" y="875.8" width="15.6" height="14.6" rx="4.4" ry="4.4" fill="#fff" stroke="#444" stroke-width="1.1"/><path d="M111.8 881.2 q4.2 1.6 8.4 0 v6.8 q-4.2 1.6 -8.4 0z" fill="url(#bodyG)"/>
<path d="M43.7 906.1 L51.9 912.3 L43.7 918.5 Z" fill="#fff" stroke="#3a3a3a" stroke-width="1.2" stroke-linejoin="round"/>
<g><path d="M69.7 912.7 a4.3 4.3 0 1 1 5.6 0 c-1 1 -1.1 2.2 -1.1 3.4 h-3.4 c0 -1.2 -0.1 -2.4 -1.1 -3.4z" fill="url(#bulbY)" stroke="#8a7a20" stroke-width="0.95"/><rect x="70.7" y="916.5" width="3.6" height="2.6" rx="0.7" fill="#555"/></g>
<path d="M91.4 906.4 h5 l1.2 1.8 h8 v11 h-14.2z M91.4 910.2 h14.2" fill="#fafafa" stroke="#4a4a4a" stroke-width="1.1" stroke-linejoin="round"/>
<circle cx="237.5" cy="274.7" r="6.3" fill="#fff" stroke="#333" stroke-width="1.2"/><circle cx="237.5" cy="274.7" r="2.6" fill="#222"/>
<path d="M14.6 241.8 v7 l-4.2 -3.5z M19.8 241.8 v7 l-4.2 -3.5z" fill="#333"/>
<circle cx="288" cy="244.5" r="4.6" fill="#222"/><rect x="285.4" y="243.8" width="5.2" height="1.5" fill="#fff"/>
<path d="M300.5 238v13 M302.5 240v9" stroke="#888" stroke-width="1"/>
<circle cx="288" cy="970.5" r="4.6" fill="#222"/><rect x="285.4" y="969.8" width="5.2" height="1.5" fill="#fff"/><rect x="287.25" y="967.9" width="1.5" height="5.2" fill="#fff"/>
<path d="M300.5 964v13 M302.5 966v9" stroke="#888" stroke-width="1"/>
<rect x="9" y="262.5" width="5.6" height="668" rx="2.8" fill="#d4d4d4"/><rect x="9" y="262.5" width="5.6" height="609" rx="2.8" fill="#9b9b9b"/>
</svg>
<div class="abs" style="left:535px;top:953px;width:284px;height:29.5px;background:#f1f1f1"></div>
<svg class="abs" style="left:0;top:940px" width="1354" height="60" viewBox="0 940 1354 60"><g transform="translate(0 1.1)">
<path d="M548 959.6v15" stroke="#2e2e2e" stroke-width="1.6"/><path d="M545.2 962.6l2.8 -4l2.8 4" fill="none" stroke="#2e2e2e" stroke-width="1.4"/>
<path d="M545.6 965.2 q-5 1.2 -5 3.4 q0 3 7.6 3.2 q7.4 -0.2 7.4 -3.2 q0 -2 -4.6 -3.2" fill="none" stroke="#2e2e2e" stroke-width="1.4"/><path d="M544.4 968.6 l-3.6 2.6 l4 2.4" fill="none" stroke="#2e2e2e" stroke-width="1.4"/>
<path d="M563.4 964.3 h6.4 l-3.2 4.2z" fill="#222"/>
<path d="M578.6 964h14.8v11h-14.8z" fill="#f6f6f6" stroke="#2e2e2e" stroke-width="1.3"/><path d="M580 964 l2.4 -3.4 l3.4 1.6 l5 -2.4 l1.6 4.2" fill="#b8b8b8" stroke="#2e2e2e" stroke-width="1.1" stroke-linejoin="round"/><rect x="581.6" y="967" width="8.8" height="4.8" fill="#9aa4b2" stroke="#2e2e2e" stroke-width="0.9"/>
<path d="M607.4 975.4 q-2.6 -3.4 -4 -7.2 q-0.4 -1.6 0.8 -1.8 q1.2 0 2.6 2.6 l0.6 -7 q0.2 -1.4 1.2 -1.4 q1 0 1.2 1.4 l0.4 4.4 l0.2 -6 q0.2 -1.4 1.3 -1.4 q1.1 0 1.3 1.4 l0.2 6 l0.8 -5 q0.3 -1.3 1.3 -1.2 q1 0.2 1 1.6 l-0.5 5.6 l1.3 -3.4 q0.6 -1.2 1.5 -0.9 q0.9 0.4 0.6 1.7 q-1.4 5.4 -2.2 7.6 q-0.6 2 -2 3.2z" fill="#fdfdfd" stroke="#2e2e2e" stroke-width="1.1" stroke-linejoin="round"/>
<circle cx="634.6" cy="966" r="4.6" fill="#dfe8f2" stroke="#2e2e2e" stroke-width="1.4"/><path d="M638 969.6l5 5" stroke="#2e2e2e" stroke-width="2.4" stroke-linecap="round"/><path d="M641.4 961.6h4.6M643.7 959.4v4.4M641.4 965.6h4.6" stroke="#2e2e2e" stroke-width="1.1"/>
<rect x="656.4" y="959.8" width="14.6" height="14.4" fill="none" stroke="#2e2e2e" stroke-width="1.1" stroke-dasharray="2.2 1.6"/><circle cx="662.6" cy="965.6" r="5.4" fill="#e4ebf3" stroke="#2e2e2e" stroke-width="1.4"/><path d="M666.6 970l4.6 4.8" stroke="#2e2e2e" stroke-width="2.6" stroke-linecap="round"/>
<path d="M679.4 964.3 h6.4 l-3.2 4.2z" fill="#222"/>
<rect x="702.6" y="959.6" width="14.8" height="11.6" rx="1" fill="#f2f2f2" stroke="#444" stroke-width="1.2"/><rect x="704.6" y="961.6" width="10.8" height="7.6" fill="#8fb1e0" stroke="#4a6a9a" stroke-width="0.8"/><path d="M708.4 971.4v2.4h3.2v-2.4M706 974.4h8" stroke="#444" stroke-width="1.2" fill="none"/>
<path d="M722.4 964.3 h6.4 l-3.2 4.2z" fill="#222"/>
<rect x="740.2" y="959.6" width="15.2" height="15" fill="#c9cdd3" stroke="#444" stroke-width="1.1"/><path d="M743.2 959.6v15M746.3 959.6v15M749.4 959.6v15M752.4 959.6v15M740.2 962.6h15.2M740.2 965.6h15.2M740.2 968.6h15.2M740.2 971.6h15.2" stroke="#555c66" stroke-width="0.9"/>
<path d="M760.4 964.3 h6.4 l-3.2 4.2z" fill="#222"/>
<rect x="778.4" y="961.0" width="6.6" height="5.6" rx="0.8" fill="#a9c4ea" stroke="#34558c" stroke-width="1.2"/>
<rect x="786.2" y="961.0" width="6.6" height="5.6" rx="0.8" fill="#a9c4ea" stroke="#34558c" stroke-width="1.2"/>
<rect x="778.4" y="968.0" width="6.6" height="5.6" rx="0.8" fill="#a9c4ea" stroke="#34558c" stroke-width="1.2"/>
<rect x="786.2" y="968.0" width="6.6" height="5.6" rx="0.8" fill="#a9c4ea" stroke="#34558c" stroke-width="1.2"/>
<path d="M798.4 964.3 h6.4 l-3.2 4.2z" fill="#222"/>
</g></svg>
<div id="title" class="abs"></div>
<div class="abs" style="left:10.3px;top:9px;width:19.8px;height:19.8px;background:linear-gradient(45deg,#fdf0e2,#fadcc0)"></div><div class="abs" style="left:21px;top:25.4px;width:5.4px;height:2.2px;background:#efb070"></div>
<div class="t" style="left:15.4px;top:8.6px;font-size:19px;font-weight:bold;color:#d7822c">F</div>
<div class="t" style="left:34.6px;top:11.7px;font-size:15.6px;color:#000;letter-spacing:-0.56px">Autodesk Fusion 360 (Education License)</div>
<div id="tabbar" class="abs"><div id="tab" class="abs"></div><div id="plus" class="abs"></div></div>
<div class="t" style="left:58.6px;top:59.1px;font-size:14px;font-weight:bold;color:#5b6068;letter-spacing:0.23px">Shoji lamp 4 v19*</div>
<div id="qat" class="abs"></div><div id="ribbon" class="abs"></div>
<div class="abs" style="left:6.5px;top:130.5px;width:126px;height:92.5px;border:1px solid #d9d9d9;background:#f2f2f2"></div>
<div class="t" style="left:39px;top:171.7px;font-size:12.5px;font-weight:bold;color:#333">DESIGN</div>
<div class="t rt" style="left:154.5px;top:135.3px;color:#0696d7;">SOLID</div>
<div class="t rt" style="left:246.6px;top:135.3px;color:#3c3c3c;">SURFACE</div>
<div class="t rt" style="left:361.6px;top:135.3px;color:#3c3c3c;">SHEET METAL</div>
<div class="t rt" style="left:502.1px;top:135.3px;color:#3c3c3c;letter-spacing:0.4px;">ASSEMBLE</div>
<div class="t rt" style="left:630.1px;top:135.3px;color:#3c3c3c;">TOOLS</div>
<div class="abs" style="left:140.6px;top:144.5px;width:64.8px;height:2.5px;background:#0696d7"></div>
<div class="t rt" style="left:255.9px;top:210.2px">CREATE</div>
<div class="t rt" style="left:578.9px;top:210.2px">MODIFY</div>
<div class="t rt" style="left:788px;top:210.2px">CONSTRUCT</div>
<div class="t rt" style="left:906.3px;top:210.2px">INSPECT</div>
<div class="t rt" style="left:1003.2px;top:210.2px">INSERT</div>
<div class="t rt" style="left:1093.5px;top:210.2px">SELECT</div>
<div class="sep" style="left:447.5px"></div>
<div class="sep" style="left:771px"></div>
<div class="sep" style="left:888.5px"></div>
<div class="sep" style="left:986px"></div>
<div class="sep" style="left:1076px"></div>
<svg class="abs" style="left:0;top:0" width="1354" height="232" viewBox="0 0 1354 232">
<path d="M1200 18.5h12.6" stroke="#111" stroke-width="1.1"/><rect x="1257.9" y="13.1" width="12" height="11.8" fill="none" stroke="#111" stroke-width="1.1"/><path d="M1316.2 12.4l13.4 13.2M1329.6 12.4l-13.4 13.2" stroke="#111" stroke-width="1.2"/>
<path d="M32.6 59.6 l6.6 -2.8 l8.4 2.6 v8.6 l-6.8 3.6 l-8.2 -4z" fill="#4f4f4f"/><path d="M32.6 59.6 l8.2 3.4 v8.6 l-8.2 -4z" fill="#8c8c8c"/><path d="M32.6 59.6 l6.6 -2.8 l8.4 2.6 l-6.8 3.6z" fill="#5a5a5a"/>
<circle cx="187.6" cy="59.6" r="3.3" fill="none" stroke="#5bb8a6" stroke-width="1.1"/>
<path d="M201.8 62.2l7.4 7.4M209.2 62.2l-7.4 7.4" stroke="#8c8c8c" stroke-width="2"/>
<path d="M231.2 66h11.6M237 60.2v11.6" stroke="#8b9db5" stroke-width="1.8"/>
<rect x="15.1" y="93.1" width="4.7" height="4.7" fill="#444"/><rect x="21.1" y="93.1" width="4.7" height="4.7" fill="#444"/><rect x="27.2" y="93.1" width="4.7" height="4.7" fill="#444"/><rect x="15.1" y="99.1" width="4.7" height="4.7" fill="#444"/><rect x="21.1" y="99.1" width="4.7" height="4.7" fill="#444"/><rect x="27.2" y="99.1" width="4.7" height="4.7" fill="#444"/><rect x="15.1" y="105.2" width="4.7" height="4.7" fill="#444"/><rect x="21.1" y="105.2" width="4.7" height="4.7" fill="#444"/><rect x="27.2" y="105.2" width="4.7" height="4.7" fill="#444"/>
<path d="M62 94.2h7.6l5.2 5.2v10.1h-12.8z" fill="#444"/><path d="M69.8 94.2v5h5" fill="none" stroke="#f1f1f1" stroke-width="1"/>
<path d="M83.2 99.8 h6.4 l-3.2 4.0z" fill="#333"/>
<path d="M116.2 94.4h13.4l2 2v13.2h-15.4z" fill="#444"/><rect x="119.4" y="95.6" width="8.8" height="5.2" fill="#f1f1f1"/><rect x="119.4" y="103.6" width="9" height="5" fill="#f1f1f1"/><rect x="120.6" y="104.8" width="2.6" height="2.8" fill="#444"/>
<path d="M162.2 100.4 l6.6 -5.4 v3.4 q9.4 0 9.2 9.4 q-2.6 -4.6 -9.2 -4.2 v3.2z" fill="#444"/>
<path d="M187.4 99.8 h6.4 l-3.2 4.0z" fill="#333"/>
<path d="M227.2 100.4 l-6.6 -5.4 v3.4 q-9.4 0 -9.2 9.4 q2.6 -4.6 9.2 -4.2 v3.2z" fill="#949494"/>
<path d="M235.9 99.6 h6.8 l-3.4 4.4z" fill="#8e8e8e"/>
<circle cx="1134.8" cy="101.9" r="7.2" fill="none" stroke="#333" stroke-width="1.7"/><path d="M1134.8 97.6v4.7h4.2" fill="none" stroke="#333" stroke-width="1.5"/>
<path d="M1279.0 99.6 h6.6 l-3.3 4.0z" fill="#444"/>
<circle cx="1319.6" cy="101.8" r="7.8" fill="#686868"/>
<path d="M1334.3 99.6 h6.6 l-3.3 4.0z" fill="#333"/>
<defs><filter id="smb" x="-20%" y="-200%" width="140%" height="500%"><feGaussianBlur stdDeviation="4"/></filter></defs><rect x="1172" y="83.5" width="96" height="7" rx="3.5" fill="#f4f4f4" opacity="0.45" filter="url(#smb)"/>
<path d="M93.2 175.4 h6.4 l-3.2 4.0z" fill="#333"/>
<path d="M311.4 213.8 h6.0 l-3.0 4.0z" fill="#333"/>
<path d="M632.4 213.8 h6.0 l-3.0 4.0z" fill="#333"/>
<path d="M870.0 213.8 h6.0 l-3.0 4.0z" fill="#333"/>
<path d="M965.2 213.8 h6.0 l-3.0 4.0z" fill="#333"/>
<path d="M1053.4 213.8 h6.0 l-3.0 4.0z" fill="#333"/>
<path d="M1147.2 213.8 h6.0 l-3.0 4.0z" fill="#333"/>
<defs><linearGradient id="gBlue" x1="0" y1="0" x2="0" y2="1"><stop offset="0" stop-color="#b4cdea"/><stop offset="1" stop-color="#8fb2de"/></linearGradient><linearGradient id="gBlueR" x1="0" y1="0" x2="0" y2="1"><stop offset="0" stop-color="#86a6d4"/><stop offset="1" stop-color="#6f92c6"/></linearGradient><linearGradient id="gGray" x1="0" y1="0" x2="0" y2="1"><stop offset="0" stop-color="#f0f1f4"/><stop offset="1" stop-color="#b4b8c2"/></linearGradient><linearGradient id="gGrayR" x1="0" y1="0" x2="0" y2="1"><stop offset="0" stop-color="#c9ccd3"/><stop offset="1" stop-color="#8e949e"/></linearGradient><linearGradient id="gGray2" x1="0" y1="0" x2="0.6" y2="1"><stop offset="0" stop-color="#f4f5f8"/><stop offset="1" stop-color="#bfc3ce"/></linearGradient><linearGradient id="gPurp" x1="0" y1="0" x2="0" y2="1"><stop offset="0" stop-color="#e3c4f5"/><stop offset="1" stop-color="#b883e0"/></linearGradient><linearGradient id="gSky" x1="0" y1="0" x2="0" y2="1"><stop offset="0" stop-color="#a9c0de"/><stop offset="0.7" stop-color="#eef2f7"/></linearGradient></defs>
<rect x="143.9" y="165" width="25" height="24.7" rx="0.8" fill="url(#gGray2)" stroke="#3a3a3a" stroke-width="1.6"/>
<path d="M146.4 166.8v20.1h13.2" fill="none" stroke="#555" stroke-width="1"/><rect x="146.2" y="184.2" width="3.4" height="3.4" fill="#3f8ae0"/>
<path d="M155.6 177.2 l1.45 -3.35 l9.7 -7.6 l2.1 2.7 l-9.7 7.6z" fill="#ffd21a" stroke="#5a4a1a" stroke-width="0.8" stroke-linejoin="round"/><path d="M155.6 177.2 l1.45 -3.35 l2.1 2.7z" fill="#fff" stroke="#5a4a1a" stroke-width="0.7" stroke-linejoin="round"/><path d="M166.75 166.25 l1.6 -1.2 l2.1 2.7 l-1.6 1.2z" fill="#b87a4a" stroke="#5a4a1a" stroke-width="0.7" stroke-linejoin="round"/>
<path d="M163.25 180.1h3.5v4.15h4.15v3.5h-4.15v4.15h-3.5v-4.15h-4.15v-3.5h4.15z" fill="#fff" stroke="#333" stroke-width="1.1" stroke-linejoin="round"/>
<path d="M194.5 166.8 l4.5 -4.5 h17.7 l-4.5 4.5z" fill="#cfe0f3" stroke="#3a3f4a" stroke-width="1.2" stroke-linejoin="round"/><path d="M212.2 166.8 l4.5 -4.5 v24.2 l-4.5 4.5z" fill="#c9ccd4" stroke="#3a3f4a" stroke-width="1.2" stroke-linejoin="round"/><rect x="194.5" y="166.8" width="17.7" height="24.2" fill="#e6e8ee" stroke="#3a3f4a" stroke-width="1.2" stroke-linejoin="round"/>
<path d="M194.5 166.8 l4.5 -4.5 h17.7 v20.1 l-4.5 4.5 h-17.7z" fill="url(#gBlueR)" stroke="#1f3a6e" stroke-width="1.2" stroke-linejoin="round"/>
<path d="M194.5 166.8 l4.5 -4.5 h17.7 l-4.5 4.5z" fill="#c8dcf2" stroke="#1f3a6e" stroke-width="1" stroke-linejoin="round"/>
<rect x="194.5" y="166.8" width="17.7" height="20.1" fill="url(#gBlue)" stroke="#1f3a6e" stroke-width="1" stroke-linejoin="round"/>
<path d="M221.4 188.7v-21.5" stroke="#333" stroke-width="1.3"/><path d="M218.6 169.9l2.8 -3.7l2.8 3.7" fill="none" stroke="#333" stroke-width="1.3"/>
<path d="M246.5 176.3 Q261.3 164 276 176.1 L269 180.8 Q261.3 177.6 253 181.6z" fill="#c8dcf2" stroke="#1f3a6e" stroke-width="1.1" stroke-linejoin="round"/>
<path d="M246.5 176.3 L253 181.6 V190.5 L246.5 185.1z" fill="#7d9fd0" stroke="#1f3a6e" stroke-width="1.1" stroke-linejoin="round"/>
<path d="M253 181.6 Q261.3 177.6 269 180.8 V190.5 Q261.3 185.8 253 190.5z" fill="url(#gBlue)" stroke="#1f3a6e" stroke-width="1.1" stroke-linejoin="round"/>
<path d="M269 180.8 L276 176.1 V186.3 L269 190.5z" fill="#f4f5f8" stroke="#2a2f3a" stroke-width="1.1" stroke-linejoin="round"/>
<path d="M274.3 167.4 Q261 160.6 249 166.6" fill="none" stroke="#333" stroke-width="1.1"/><path d="M245.9 168.6l4.5 -3.6l0.8 4.2z" fill="#333"/>
<path d="M299.5 171.5 l6.5 -7.3 h20.6 l-6.5 7.3z" fill="#f8f8f9" stroke="#4a4a4a" stroke-width="1.1" stroke-linejoin="round"/><path d="M320.1 171.5 l6.5 -7.3 v20.1 l-6.5 7.3z" fill="url(#gGrayR)" stroke="#4a4a4a" stroke-width="1.1" stroke-linejoin="round"/><rect x="299.5" y="171.5" width="20.6" height="20.1" fill="url(#gGray)" stroke="#4a4a4a" stroke-width="1.1" stroke-linejoin="round"/>
<circle cx="309.5" cy="181.6" r="7" fill="#a9c6ea" stroke="#1f3a6e" stroke-width="1.1"/>
<path d="M307.6 174.9 q7 0.6 8.6 8.6 q-3.4 1.4 -6.6 -1.6 q-3 -3 -2 -7z" fill="#fff" stroke="#1f3a6e" stroke-width="0.8"/>
<path d="M354.4 166.5h21M354.4 187.1h21M354.4 166.5v20.6" stroke="#333" stroke-width="1.2" fill="none"/>
<path d="M349.3 164.3 l2.0 -1.8 h7.6 l-2.0 1.8z" fill="#f4f4f6" stroke="#222" stroke-width="1.2" stroke-linejoin="round"/><path d="M356.9 164.3 l2.0 -1.8 v7.2 l-2.0 1.8z" fill="#c9ccd4" stroke="#222" stroke-width="1.2" stroke-linejoin="round"/><rect x="349.3" y="164.3" width="7.6" height="7.2" fill="url(#gGray)" stroke="#222" stroke-width="1.2" stroke-linejoin="round"/>
<path d="M370.6 164.3 l2.0 -1.8 h7.6 l-2.0 1.8z" fill="#c8dcf2" stroke="#1f3a6e" stroke-width="0.9" stroke-linejoin="round"/><path d="M378.2 164.3 l2.0 -1.8 v7.2 l-2.0 1.8z" fill="#7d9fd0" stroke="#1f3a6e" stroke-width="0.9" stroke-linejoin="round"/><rect x="370.6" y="164.3" width="7.6" height="7.2" fill="url(#gBlue)" stroke="#1f3a6e" stroke-width="0.9" stroke-linejoin="round"/>
<path d="M349.3 185.4 l2.0 -1.8 h7.6 l-2.0 1.8z" fill="#c8dcf2" stroke="#1f3a6e" stroke-width="0.9" stroke-linejoin="round"/><path d="M356.9 185.4 l2.0 -1.8 v7.2 l-2.0 1.8z" fill="#7d9fd0" stroke="#1f3a6e" stroke-width="0.9" stroke-linejoin="round"/><rect x="349.3" y="185.4" width="7.6" height="7.2" fill="url(#gBlue)" stroke="#1f3a6e" stroke-width="0.9" stroke-linejoin="round"/>
<path d="M370.6 185.4 l2.0 -1.8 h7.6 l-2.0 1.8z" fill="#c8dcf2" stroke="#1f3a6e" stroke-width="0.9" stroke-linejoin="round"/><path d="M378.2 185.4 l2.0 -1.8 v7.2 l-2.0 1.8z" fill="#7d9fd0" stroke="#1f3a6e" stroke-width="0.9" stroke-linejoin="round"/><rect x="370.6" y="185.4" width="7.6" height="7.2" fill="url(#gBlue)" stroke="#1f3a6e" stroke-width="0.9" stroke-linejoin="round"/>
<path d="M402.4 170 q0 -6.6 6.6 -7.4 q6 -0.8 12 0 q6.6 0.8 6.7 7.4 v10 q0 6 -6 7 q-6.5 1 -13 0 q-6.3 -1 -6.3 -7z" fill="url(#gPurp)" stroke="#8a4fb8" stroke-width="1.1"/>
<path d="M402.6 171.6h18.6 M402.6 177.6h18.8 M402.6 183h18.6 M408 165.6v21.6 M414.2 165.4v22 M420.6 165.6v21.4 M403.6 166.4 l3.4 -2.6 M408 165.6 l4 -3 M414.2 165.4 l4 -3 M420.6 165.6 l3.6 -2.4 M420.8 171.6 l6.6 -3 M421 177.6 l6.6 -2.6 M420.8 183 l6 -3 M424.4 163.6 v22" fill="none" stroke="#7a3fa8" stroke-width="0.8"/>
<rect x="423.4" y="181.2" width="8.2" height="10.2" fill="#fff" stroke="#333" stroke-width="1.1"/><path d="M424.6 186.3h3v-2.6l3.2 2.6l-3.2 2.6v-2.6z" fill="#222" stroke="#222" stroke-width="0.6" stroke-linejoin="round"/>
<path d="M465.4 169.8 l7.1 -7.1 h5.0 l-7.1 7.1z" fill="#fafafa" stroke="#4a4a4a" stroke-width="1.1" stroke-linejoin="round"/><path d="M470.4 169.8 l7.1 -7.1 v21.2 l-7.1 7.1z" fill="#d0d3da" stroke="#4a4a4a" stroke-width="1.1" stroke-linejoin="round"/><rect x="465.4" y="169.8" width="5.0" height="21.2" fill="#f4f5f8" stroke="#4a4a4a" stroke-width="1.1" stroke-linejoin="round"/>
<path d="M470.4 169.8 l7.1 -7.1 h13.6 l-7.1 7.1z" fill="#c8dcf2" stroke="#1f3a6e" stroke-width="1.2" stroke-linejoin="round"/><path d="M484.0 169.8 l7.1 -7.1 v21.2 l-7.1 7.1z" fill="url(#gBlueR)" stroke="#1f3a6e" stroke-width="1.2" stroke-linejoin="round"/><rect x="470.4" y="169.8" width="13.6" height="21.2" fill="url(#gBlue)" stroke="#1f3a6e" stroke-width="1.2" stroke-linejoin="round"/>
<path d="M486.9 173.9h3.9v-2.4l4.6 4.5l-4.6 4.5v-2.5h-3.9z" fill="#2a2a2a"/>
<path d="M517.4 171.5 l6.9 -7.3 h9.3 q10 0.4 11 9.7 v10 l-6.9 7.1 h-20.3z" fill="url(#gGray)" stroke="#4a4a4a" stroke-width="1.1" stroke-linejoin="round"/>
<path d="M517.4 171.5 l6.9 -7.3 h9.3 l-6.3 6.2 z" fill="#f8f8f9" stroke="#4a4a4a" stroke-width="0.9" stroke-linejoin="round"/>
<path d="M537.7 182.8 l6.9 -5.3 v6.4 l-6.9 7.1z" fill="url(#gGrayR)" stroke="#4a4a4a" stroke-width="0.9" stroke-linejoin="round"/>
<path d="M527.3 170.4 l6.3 -6.2 q10 0.4 11 9.7 v3.6 l-6.9 5.3 q-0.6 -10.4 -10.4 -12.4z" fill="url(#gBlue)" stroke="#1f3a6e" stroke-width="1.1" stroke-linejoin="round"/>
<path d="M570.6 171.5 l6.9 -7.3 h20.3 l-6.9 7.3z" fill="#f8f8f9" stroke="#4a4a4a" stroke-width="1.1" stroke-linejoin="round"/><path d="M590.9 171.5 l6.9 -7.3 v19.5 l-6.9 7.3z" fill="url(#gGrayR)" stroke="#4a4a4a" stroke-width="1.1" stroke-linejoin="round"/><rect x="570.6" y="171.5" width="20.3" height="19.5" fill="url(#gGray)" stroke="#4a4a4a" stroke-width="1.1" stroke-linejoin="round"/>
<rect x="574.4" y="175.3" width="12.4" height="11.8" fill="#8fb2de" stroke="#1f3a6e" stroke-width="1.1"/><rect x="579.6" y="176.3" width="6.3" height="5.9" fill="#fff" stroke="#1f3a6e" stroke-width="0.8"/>
<path d="M631.6 166.8 l4.1 -4.5 h15.0 l-4.1 4.5z" fill="#c8dcf2" stroke="#1f3a6e" stroke-width="1.3" stroke-linejoin="round"/><path d="M646.6 166.8 l4.1 -4.5 v14.8 l-4.1 4.5z" fill="url(#gBlueR)" stroke="#1f3a6e" stroke-width="1.3" stroke-linejoin="round"/><rect x="631.6" y="166.8" width="15.0" height="14.8" fill="url(#gBlue)" stroke="#1f3a6e" stroke-width="1.3" stroke-linejoin="round"/>
<path d="M621.2 176.9 l4.1 -4.5 h15.4 l-4.1 4.5z" fill="#c8dcf2" stroke="#1f3a6e" stroke-width="1.3" stroke-linejoin="round"/><path d="M636.6 176.9 l4.1 -4.5 v14.5 l-4.1 4.5z" fill="url(#gBlueR)" stroke="#1f3a6e" stroke-width="1.3" stroke-linejoin="round"/><rect x="621.2" y="176.9" width="15.4" height="14.5" fill="url(#gBlue)" stroke="#1f3a6e" stroke-width="1.3" stroke-linejoin="round"/>
<path d="M674.4 171.0 l7.1 -7.1 h20.1 l-7.1 7.1z" fill="#c8dcf2" stroke="#4a4a4a" stroke-width="1.1" stroke-linejoin="round"/><path d="M694.5 171.0 l7.1 -7.1 v20.4 l-7.1 7.1z" fill="url(#gGrayR)" stroke="#4a4a4a" stroke-width="1.1" stroke-linejoin="round"/><rect x="674.4" y="171.0" width="20.1" height="20.4" fill="url(#gGray)" stroke="#4a4a4a" stroke-width="1.1" stroke-linejoin="round"/>
<path d="M674.4 171h20.1v9.6 q-2.6 2.6 -6 1 q-5 -3.4 -9 -2.4 q-3 0.8 -5.1 1z" fill="url(#gBlue)" stroke="#1f3a6e" stroke-width="0.9"/>
<path d="M694.5 171 l7.1 -7.1 v10.4 l-7.1 6.3z" fill="url(#gBlueR)" stroke="#1f3a6e" stroke-width="0.9"/>
<path d="M674.4 180.2 q2.1 -0.2 5.1 -1 q4 -1 9 2.4 q3.4 1.6 6 -1 l7.1 -6.3" fill="none" stroke="#e02b1c" stroke-width="1.3"/>
<path d="M740 163.9l5.3 5.5h-3v5.4h-4.6v-5.4h-3z M740 192.2l5.3 -5.5h-3v-5.4h-4.6v5.4h-3z M725.8 178l5.5 -5.3v3h5.4v4.6h-5.4v3z M754.2 178l-5.5 -5.3v3h-5.4v4.6h5.4v3z" fill="#3a3a3a"/>
<rect x="737.4" y="175.4" width="5.2" height="5.2" fill="#f4f4f8" stroke="#3a3a3a" stroke-width="1.1"/>
<path d="M815.4 171.3 l6.4 -7.4 h10.7 l-6.4 7.4z" fill="#f6f6f8" stroke="#3a3a3a" stroke-width="1.1" stroke-linejoin="round"/><path d="M826.1 171.3 l6.4 -7.4 v19.9 l-6.4 7.4z" fill="#4f8f3a" stroke="#3a3a3a" stroke-width="1.1" stroke-linejoin="round"/><rect x="815.4" y="171.3" width="10.7" height="19.9" fill="url(#gGray2)" stroke="#3a3a3a" stroke-width="1.1" stroke-linejoin="round"/>
<path d="M826.1 171.3 l6.4 -7.4 v19.9 l-6.4 7.4z" fill="#5a9a3f" stroke="#2e5c1e" stroke-width="1" stroke-linejoin="round"/>
<path d="M836.4 171.3 l8.3 -8 v19.9 l-8.3 8z" fill="#f0a06a" stroke="#a85a24" stroke-width="1.1" stroke-linejoin="round"/>
<path d="M923.1 172.6h29M923.1 170v5.3M952.1 170v5.3" stroke="#444" stroke-width="1.1" fill="none"/>
<rect x="923.1" y="180" width="29" height="5.9" rx="1" fill="#f6c83c" stroke="#c9961c" stroke-width="0.9"/>
<path d="M925.2 180.4v2.8M927.5 180.4v1.8M929.7 180.4v2.8M932.0 180.4v1.8M934.2 180.4v2.8M936.5 180.4v1.8M938.7 180.4v2.8M941.0 180.4v1.8M943.2 180.4v2.8M945.5 180.4v1.8M947.7 180.4v2.8M950.0 180.4v1.8" stroke="#9a7414" stroke-width="0.7"/>
<rect x="1016.4" y="162.4" width="29.2" height="29" rx="1.8" fill="url(#gSky)" stroke="#333" stroke-width="1.4"/>
<path d="M1017.2 190.6v-6.6l10.2 -8.2l2.6 1.2l3.6 -1.8l11.2 12v3.4z" fill="#8d939e"/><path d="M1017.2 190.6v-6.6l10.2 -8.2l2.6 1.2l-2.4 3.6l3 2l-4.4 8z" fill="#5f6570"/><path d="M1033.6 175.2l11.2 12v-2.8l-8.6 -9.6z" fill="#c4c8d0"/>
<circle cx="1036.7" cy="170" r="3.8" fill="#fff" opacity="0.7"/><circle cx="1036.7" cy="170" r="2.5" fill="#fff4c2"/>
<rect x="1097.8" y="154.8" width="47.1" height="47" fill="#0696d7"/>
<rect x="1106.4" y="162.6" width="20.1" height="14" fill="none" stroke="#5a9a3a" stroke-width="1.6"/>
<path d="M1127 176.6v13.4l3.1 -2.9l2.3 5.1l2.3 -1l-2.3 -5.1h4.3z" fill="#fff" stroke="#222" stroke-width="1" stroke-linejoin="round"/>
</svg>
<div class="t" style="left:1316.2px;top:95.6px;font-size:12.5px;font-weight:bold;color:#fff">?</div>
<div id="timeline" class="abs"></div><div id="taskbar" class="abs"><div class="abs" style="left:324px;top:0;width:60px;height:8px;background:#4d4d4d"></div></div>
<svg class="abs" style="left:0;top:987px" width="1354" height="51" viewBox="0 987 1354 51">
<defs><linearGradient id="gBlueT" x1="0" y1="0" x2="0" y2="1"><stop offset="0" stop-color="#b9d2ee"/><stop offset="1" stop-color="#7fa6d6"/></linearGradient><linearGradient id="gGrayT" x1="0" y1="0" x2="0" y2="1"><stop offset="0" stop-color="#fafafa"/><stop offset="1" stop-color="#c4c7cd"/></linearGradient></defs>
<rect x="1115.5" y="995" width="260" height="6.6" rx="3.3" fill="#cbcbcb"/>
<rect x="12" y="1010" width="2" height="14" fill="#444"/><path d="M24.2 1010v14l-10 -7z" fill="#444"/>
<path d="M46 1011.4v11.2l-9.6 -5.6z" fill="#444"/><rect x="46.6" y="1013.6" width="2.2" height="6.8" fill="#444"/>
<path d="M61.6 1008.8v16.4l12.4 -8.2z" fill="#444"/>
<rect x="86" y="1013.6" width="2.2" height="6.8" fill="#444"/><path d="M89 1011.4v11.2l9.6 -5.6z" fill="#444"/>
<path d="M111.8 1010v14l10 -7z" fill="#444"/><rect x="122" y="1010" width="2" height="14" fill="#444"/>
<g transform="translate(0 0.6)">
<path d="M147.1 1011 l5.3 -7.1 h6.7 l3.8 3.5 v12 h-11.4 l-4.4 -3.6z" fill="url(#gGrayT)" stroke="#444" stroke-width="1.1" stroke-linejoin="round"/><path d="M147.5 1010.8 l5.4 -6.5 l4.8 4 l-6.2 5.8z" fill="#8fb2de" stroke="#2f4f8f" stroke-width="0.8" stroke-linejoin="round"/>
<path d="M171.2 1007.4 l1.8 -3.1 h7.8 v11.5 l-2.2 3.6 h-7.4z" fill="#eef0f4" stroke="#4a5060" stroke-width="1"/><path d="M171.2 1007.4 l1.8 -3.1 h7.8 v11.5 l-2.2 0 h-7.4z" fill="#a9c4e6" stroke="#1f3f7f" stroke-width="1"/><rect x="171.8" y="1007.2" width="6.2" height="8.2" fill="url(#gBlueT)"/><path d="M178.6 1007.4 v8.4 M171.2 1007.4 h7.4 l2 -3" fill="none" stroke="#1f3f7f" stroke-width="0.7"/><path d="M184.6 1019v-14.4M182.4 1007.4l2.2 -3l2.2 3" fill="none" stroke="#333" stroke-width="1.1"/>
<path d="M195.2 1007.4 l1.8 -3.1 h7.8 v11.5 l-2.2 3.6 h-7.4z" fill="#eef0f4" stroke="#4a5060" stroke-width="1"/><path d="M195.2 1007.4 l1.8 -3.1 h7.8 v11.5 l-2.2 0 h-7.4z" fill="#a9c4e6" stroke="#1f3f7f" stroke-width="1"/><rect x="195.8" y="1007.2" width="6.2" height="8.2" fill="url(#gBlueT)"/><path d="M202.6 1007.4 v8.4 M195.2 1007.4 h7.4 l2 -3" fill="none" stroke="#1f3f7f" stroke-width="0.7"/><path d="M208.6 1019v-14.4M206.4 1007.4l2.2 -3l2.2 3" fill="none" stroke="#333" stroke-width="1.1"/>
<path d="M219.2 1007.4 l1.8 -3.1 h7.8 v11.5 l-2.2 3.6 h-7.4z" fill="#eef0f4" stroke="#4a5060" stroke-width="1"/><path d="M219.2 1007.4 l1.8 -3.1 h7.8 v11.5 l-2.2 0 h-7.4z" fill="#a9c4e6" stroke="#1f3f7f" stroke-width="1"/><rect x="219.8" y="1007.2" width="6.2" height="8.2" fill="url(#gBlueT)"/><path d="M226.6 1007.4 v8.4 M219.2 1007.4 h7.4 l2 -3" fill="none" stroke="#1f3f7f" stroke-width="0.7"/><path d="M232.6 1019v-14.4M230.4 1007.4l2.2 -3l2.2 3" fill="none" stroke="#333" stroke-width="1.1"/>
<path d="M243.2 1007.4 l1.8 -3.1 h7.8 v11.5 l-2.2 3.6 h-7.4z" fill="#eef0f4" stroke="#4a5060" stroke-width="1"/><path d="M243.2 1007.4 l1.8 -3.1 h7.8 v11.5 l-2.2 0 h-7.4z" fill="#a9c4e6" stroke="#1f3f7f" stroke-width="1"/><rect x="243.8" y="1007.2" width="6.2" height="8.2" fill="url(#gBlueT)"/><path d="M250.6 1007.4 v8.4 M243.2 1007.4 h7.4 l2 -3" fill="none" stroke="#1f3f7f" stroke-width="0.7"/><path d="M256.6 1019v-14.4M254.4 1007.4l2.2 -3l2.2 3" fill="none" stroke="#333" stroke-width="1.1"/>
<path d="M267.2 1007.4 l1.8 -3.1 h7.8 v11.5 l-2.2 3.6 h-7.4z" fill="#eef0f4" stroke="#4a5060" stroke-width="1"/><path d="M267.2 1007.4 l1.8 -3.1 h7.8 v11.5 l-2.2 0 h-7.4z" fill="#a9c4e6" stroke="#1f3f7f" stroke-width="1"/><rect x="267.8" y="1007.2" width="6.2" height="8.2" fill="url(#gBlueT)"/><path d="M274.6 1007.4 v8.4 M267.2 1007.4 h7.4 l2 -3" fill="none" stroke="#1f3f7f" stroke-width="0.7"/><path d="M280.6 1019v-14.4M278.4 1007.4l2.2 -3l2.2 3" fill="none" stroke="#333" stroke-width="1.1"/>
<path d="M291.2 1007.4 l1.8 -3.1 h7.8 v11.5 l-2.2 3.6 h-7.4z" fill="#eef0f4" stroke="#4a5060" stroke-width="1"/><path d="M291.2 1007.4 l1.8 -3.1 h7.8 v11.5 l-2.2 0 h-7.4z" fill="#a9c4e6" stroke="#1f3f7f" stroke-width="1"/><rect x="291.8" y="1007.2" width="6.2" height="8.2" fill="url(#gBlueT)"/><path d="M298.6 1007.4 v8.4 M291.2 1007.4 h7.4 l2 -3" fill="none" stroke="#1f3f7f" stroke-width="0.7"/><path d="M304.6 1019v-14.4M302.4 1007.4l2.2 -3l2.2 3" fill="none" stroke="#333" stroke-width="1.1"/>
<path d="M315.2 1007.4 l1.8 -3.1 h7.8 v11.5 l-2.2 3.6 h-7.4z" fill="#eef0f4" stroke="#4a5060" stroke-width="1"/><path d="M315.2 1007.4 l1.8 -3.1 h7.8 v11.5 l-2.2 0 h-7.4z" fill="#a9c4e6" stroke="#1f3f7f" stroke-width="1"/><rect x="315.8" y="1007.2" width="6.2" height="8.2" fill="url(#gBlueT)"/><path d="M322.6 1007.4 v8.4 M315.2 1007.4 h7.4 l2 -3" fill="none" stroke="#1f3f7f" stroke-width="0.7"/><path d="M328.6 1019v-14.4M326.4 1007.4l2.2 -3l2.2 3" fill="none" stroke="#333" stroke-width="1.1"/>
<rect x="339.6" y="1004.6" width="14.6" height="14.6" fill="#eef3fa" stroke="#111" stroke-width="1.5"/><rect x="341.0" y="1015.2" width="3" height="3" fill="#4a90e0"/><path d="M342.6 1006.8 v9.6 h8.8" fill="none" stroke="#111" stroke-width="1.3"/><path d="M343.8 1015.2 l1.2 -3.2 l9.4 -8.4 l0.8 0 l0 2.6 l-9 8.2z" fill="#ffd21a" stroke="#c9a010" stroke-width="0.4" stroke-linejoin="round"/><path d="M343.8 1015.2 l1.2 -3.2 l2 1.6z" fill="#d89a5a"/><path d="M343.8 1015.2 l0.5 -1.3 l0.8 0.7z" fill="#222"/>
<path d="M363.2 1007.4 l1.8 -3.1 h7.8 v11.5 l-2.2 3.6 h-7.4z" fill="#eef0f4" stroke="#4a5060" stroke-width="1"/><path d="M363.2 1007.4 l1.8 -3.1 h7.8 v11.5 l-2.2 0 h-7.4z" fill="#a9c4e6" stroke="#1f3f7f" stroke-width="1"/><rect x="363.8" y="1007.2" width="6.2" height="8.2" fill="url(#gBlueT)"/><path d="M370.6 1007.4 v8.4 M363.2 1007.4 h7.4 l2 -3" fill="none" stroke="#1f3f7f" stroke-width="0.7"/><path d="M376.6 1019v-14.4M374.4 1007.4l2.2 -3l2.2 3" fill="none" stroke="#333" stroke-width="1.1"/>
<path d="M387.2 1007.4 l1.8 -3.1 h7.8 v11.5 l-2.2 3.6 h-7.4z" fill="#eef0f4" stroke="#4a5060" stroke-width="1"/><path d="M387.2 1007.4 l1.8 -3.1 h7.8 v11.5 l-2.2 0 h-7.4z" fill="#a9c4e6" stroke="#1f3f7f" stroke-width="1"/><rect x="387.8" y="1007.2" width="6.2" height="8.2" fill="url(#gBlueT)"/><path d="M394.6 1007.4 v8.4 M387.2 1007.4 h7.4 l2 -3" fill="none" stroke="#1f3f7f" stroke-width="0.7"/><path d="M400.6 1019v-14.4M398.4 1007.4l2.2 -3l2.2 3" fill="none" stroke="#333" stroke-width="1.1"/>
<path d="M411.2 1007.4 l1.8 -3.1 h7.8 v11.5 l-2.2 3.6 h-7.4z" fill="#eef0f4" stroke="#4a5060" stroke-width="1"/><path d="M411.2 1007.4 l1.8 -3.1 h7.8 v11.5 l-2.2 0 h-7.4z" fill="#a9c4e6" stroke="#1f3f7f" stroke-width="1"/><rect x="411.8" y="1007.2" width="6.2" height="8.2" fill="url(#gBlueT)"/><path d="M418.6 1007.4 v8.4 M411.2 1007.4 h7.4 l2 -3" fill="none" stroke="#1f3f7f" stroke-width="0.7"/><path d="M424.6 1019v-14.4M422.4 1007.4l2.2 -3l2.2 3" fill="none" stroke="#333" stroke-width="1.1"/>
<path d="M435.2 1007.4 l1.8 -3.1 h7.8 v11.5 l-2.2 3.6 h-7.4z" fill="#eef0f4" stroke="#4a5060" stroke-width="1"/><path d="M435.2 1007.4 l1.8 -3.1 h7.8 v11.5 l-2.2 0 h-7.4z" fill="#a9c4e6" stroke="#1f3f7f" stroke-width="1"/><rect x="435.8" y="1007.2" width="6.2" height="8.2" fill="url(#gBlueT)"/><path d="M442.6 1007.4 v8.4 M435.2 1007.4 h7.4 l2 -3" fill="none" stroke="#1f3f7f" stroke-width="0.7"/><path d="M448.6 1019v-14.4M446.4 1007.4l2.2 -3l2.2 3" fill="none" stroke="#333" stroke-width="1.1"/>
<path d="M459.1 1011 l5.3 -7.1 h6.7 l3.8 3.5 v12 h-11.4 l-4.4 -3.6z" fill="url(#gGrayT)" stroke="#444" stroke-width="1.1" stroke-linejoin="round"/><path d="M459.5 1010.8 l5.4 -6.5 l4.8 4 l-6.2 5.8z" fill="#8fb2de" stroke="#2f4f8f" stroke-width="0.8" stroke-linejoin="round"/>
<rect x="483.6" y="1004.6" width="14.6" height="14.6" fill="#eef3fa" stroke="#111" stroke-width="1.5"/><rect x="485.0" y="1015.2" width="3" height="3" fill="#4a90e0"/><path d="M486.6 1006.8 v9.6 h8.8" fill="none" stroke="#111" stroke-width="1.3"/><path d="M487.8 1015.2 l1.2 -3.2 l9.4 -8.4 l0.8 0 l0 2.6 l-9 8.2z" fill="#ffd21a" stroke="#c9a010" stroke-width="0.4" stroke-linejoin="round"/><path d="M487.8 1015.2 l1.2 -3.2 l2 1.6z" fill="#d89a5a"/><path d="M487.8 1015.2 l0.5 -1.3 l0.8 0.7z" fill="#222"/>
<path d="M507.2 1007.4 l1.8 -3.1 h7.8 v11.5 l-2.2 3.6 h-7.4z" fill="#eef0f4" stroke="#4a5060" stroke-width="1"/><path d="M507.2 1007.4 l1.8 -3.1 h7.8 v11.5 l-2.2 0 h-7.4z" fill="#a9c4e6" stroke="#1f3f7f" stroke-width="1"/><rect x="507.8" y="1007.2" width="6.2" height="8.2" fill="url(#gBlueT)"/><path d="M514.6 1007.4 v8.4 M507.2 1007.4 h7.4 l2 -3" fill="none" stroke="#1f3f7f" stroke-width="0.7"/><path d="M520.6 1019v-14.4M518.4 1007.4l2.2 -3l2.2 3" fill="none" stroke="#333" stroke-width="1.1"/>
<path d="M531.2 1007.4 l1.8 -3.1 h7.8 v11.5 l-2.2 3.6 h-7.4z" fill="#eef0f4" stroke="#4a5060" stroke-width="1"/><path d="M531.2 1007.4 l1.8 -3.1 h7.8 v11.5 l-2.2 0 h-7.4z" fill="#a9c4e6" stroke="#1f3f7f" stroke-width="1"/><rect x="531.8" y="1007.2" width="6.2" height="8.2" fill="url(#gBlueT)"/><path d="M538.6 1007.4 v8.4 M531.2 1007.4 h7.4 l2 -3" fill="none" stroke="#1f3f7f" stroke-width="0.7"/><path d="M544.6 1019v-14.4M542.4 1007.4l2.2 -3l2.2 3" fill="none" stroke="#333" stroke-width="1.1"/>
<path d="M555.2 1006.6 q0 -2.6 2.4 -2.6 h1.4 l2.4 2.4 v10.6 l-2 1.8 h-2 q-2.2 0 -2.2 -2.4z" fill="url(#gGrayT)" stroke="#555" stroke-width="1" stroke-linejoin="round"/><path d="M569.6 1006.6 q0 -2.6 -2.4 -2.6 h-1.4 l-2.4 2.4 v10.6 l2 1.8 h2 q2.2 0 2.2 -2.4z" fill="#9dbbe2" stroke="#1f3f7f" stroke-width="1" stroke-linejoin="round"/><path d="M558.8 1007.6 v8.6 M566.2 1007.6 v8.6" stroke="#e8eef8" stroke-width="1.4"/><path d="M562.4 1003.4v16.6 M559.0 1015.2 h6" stroke="#333" stroke-width="1" fill="none"/>
<path d="M579.1 1011 l5.3 -7.1 h6.7 l3.8 3.5 v12 h-11.4 l-4.4 -3.6z" fill="url(#gGrayT)" stroke="#444" stroke-width="1.1" stroke-linejoin="round"/><path d="M579.5 1010.8 l5.4 -6.5 l4.8 4 l-6.2 5.8z" fill="#8fb2de" stroke="#2f4f8f" stroke-width="0.8" stroke-linejoin="round"/>
<path d="M603.1 1011 l5.3 -7.1 h6.7 l3.8 3.5 v12 h-11.4 l-4.4 -3.6z" fill="url(#gGrayT)" stroke="#444" stroke-width="1.1" stroke-linejoin="round"/><path d="M603.5 1010.8 l5.4 -6.5 l4.8 4 l-6.2 5.8z" fill="#8fb2de" stroke="#2f4f8f" stroke-width="0.8" stroke-linejoin="round"/>
<path d="M627.1 1011 l5.3 -7.1 h6.7 l3.8 3.5 v12 h-11.4 l-4.4 -3.6z" fill="url(#gGrayT)" stroke="#444" stroke-width="1.1" stroke-linejoin="round"/><path d="M627.5 1010.8 l5.4 -6.5 l4.8 4 l-6.2 5.8z" fill="#8fb2de" stroke="#2f4f8f" stroke-width="0.8" stroke-linejoin="round"/>
<path d="M651.1 1011 l5.3 -7.1 h6.7 l3.8 3.5 v12 h-11.4 l-4.4 -3.6z" fill="url(#gGrayT)" stroke="#444" stroke-width="1.1" stroke-linejoin="round"/><path d="M651.5 1010.8 l5.4 -6.5 l4.8 4 l-6.2 5.8z" fill="#8fb2de" stroke="#2f4f8f" stroke-width="0.8" stroke-linejoin="round"/>
<rect x="675.6" y="1004.6" width="14.6" height="14.6" fill="#eef3fa" stroke="#111" stroke-width="1.5"/><rect x="677.0" y="1015.2" width="3" height="3" fill="#4a90e0"/><path d="M678.6 1006.8 v9.6 h8.8" fill="none" stroke="#111" stroke-width="1.3"/><path d="M679.8 1015.2 l1.2 -3.2 l9.4 -8.4 l0.8 0 l0 2.6 l-9 8.2z" fill="#ffd21a" stroke="#c9a010" stroke-width="0.4" stroke-linejoin="round"/><path d="M679.8 1015.2 l1.2 -3.2 l2 1.6z" fill="#d89a5a"/><path d="M679.8 1015.2 l0.5 -1.3 l0.8 0.7z" fill="#222"/>
<path d="M699.2 1007.4 l1.8 -3.1 h7.8 v11.5 l-2.2 3.6 h-7.4z" fill="#eef0f4" stroke="#4a5060" stroke-width="1"/><path d="M699.2 1007.4 l1.8 -3.1 h7.8 v11.5 l-2.2 0 h-7.4z" fill="#a9c4e6" stroke="#1f3f7f" stroke-width="1"/><rect x="699.8" y="1007.2" width="6.2" height="8.2" fill="url(#gBlueT)"/><path d="M706.6 1007.4 v8.4 M699.2 1007.4 h7.4 l2 -3" fill="none" stroke="#1f3f7f" stroke-width="0.7"/><path d="M712.6 1019v-14.4M710.4 1007.4l2.2 -3l2.2 3" fill="none" stroke="#333" stroke-width="1.1"/>
<path d="M723.1 1011 l5.3 -7.1 h6.7 l3.8 3.5 v12 h-11.4 l-4.4 -3.6z" fill="url(#gGrayT)" stroke="#444" stroke-width="1.1" stroke-linejoin="round"/><path d="M723.5 1010.8 l5.4 -6.5 l4.8 4 l-6.2 5.8z" fill="#8fb2de" stroke="#2f4f8f" stroke-width="0.8" stroke-linejoin="round"/>
<path d="M747.1 1011 l5.3 -7.1 h6.7 l3.8 3.5 v12 h-11.4 l-4.4 -3.6z" fill="url(#gGrayT)" stroke="#444" stroke-width="1.1" stroke-linejoin="round"/><path d="M747.5 1010.8 l5.4 -6.5 l4.8 4 l-6.2 5.8z" fill="#8fb2de" stroke="#2f4f8f" stroke-width="0.8" stroke-linejoin="round"/>
<rect x="771.6" y="1004.6" width="14.6" height="14.6" fill="#eef3fa" stroke="#111" stroke-width="1.5"/><rect x="773.0" y="1015.2" width="3" height="3" fill="#4a90e0"/><path d="M774.6 1006.8 v9.6 h8.8" fill="none" stroke="#111" stroke-width="1.3"/><path d="M775.8 1015.2 l1.2 -3.2 l9.4 -8.4 l0.8 0 l0 2.6 l-9 8.2z" fill="#ffd21a" stroke="#c9a010" stroke-width="0.4" stroke-linejoin="round"/><path d="M775.8 1015.2 l1.2 -3.2 l2 1.6z" fill="#d89a5a"/><path d="M775.8 1015.2 l0.5 -1.3 l0.8 0.7z" fill="#222"/>
<path d="M795.2 1007.4 l1.8 -3.1 h7.8 v11.5 l-2.2 3.6 h-7.4z" fill="#eef0f4" stroke="#4a5060" stroke-width="1"/><path d="M795.2 1007.4 l1.8 -3.1 h7.8 v11.5 l-2.2 0 h-7.4z" fill="#a9c4e6" stroke="#1f3f7f" stroke-width="1"/><rect x="795.8" y="1007.2" width="6.2" height="8.2" fill="url(#gBlueT)"/><path d="M802.6 1007.4 v8.4 M795.2 1007.4 h7.4 l2 -3" fill="none" stroke="#1f3f7f" stroke-width="0.7"/><path d="M808.6 1019v-14.4M806.4 1007.4l2.2 -3l2.2 3" fill="none" stroke="#333" stroke-width="1.1"/>
<path d="M819.1 1011 l5.3 -7.1 h6.7 l3.8 3.5 v12 h-11.4 l-4.4 -3.6z" fill="url(#gGrayT)" stroke="#444" stroke-width="1.1" stroke-linejoin="round"/><path d="M819.5 1010.8 l5.4 -6.5 l4.8 4 l-6.2 5.8z" fill="#8fb2de" stroke="#2f4f8f" stroke-width="0.8" stroke-linejoin="round"/>
<rect x="843.6" y="1004.6" width="14.6" height="14.6" fill="#eef3fa" stroke="#111" stroke-width="1.5"/><rect x="845.0" y="1015.2" width="3" height="3" fill="#4a90e0"/><path d="M846.6 1006.8 v9.6 h8.8" fill="none" stroke="#111" stroke-width="1.3"/><path d="M847.8 1015.2 l1.2 -3.2 l9.4 -8.4 l0.8 0 l0 2.6 l-9 8.2z" fill="#ffd21a" stroke="#c9a010" stroke-width="0.4" stroke-linejoin="round"/><path d="M847.8 1015.2 l1.2 -3.2 l2 1.6z" fill="#d89a5a"/><path d="M847.8 1015.2 l0.5 -1.3 l0.8 0.7z" fill="#222"/>
<path d="M867.2 1007.4 l1.8 -3.1 h7.8 v11.5 l-2.2 3.6 h-7.4z" fill="#eef0f4" stroke="#4a5060" stroke-width="1"/><path d="M867.2 1007.4 l1.8 -3.1 h7.8 v11.5 l-2.2 0 h-7.4z" fill="#a9c4e6" stroke="#1f3f7f" stroke-width="1"/><rect x="867.8" y="1007.2" width="6.2" height="8.2" fill="url(#gBlueT)"/><path d="M874.6 1007.4 v8.4 M867.2 1007.4 h7.4 l2 -3" fill="none" stroke="#1f3f7f" stroke-width="0.7"/><path d="M880.6 1019v-14.4M878.4 1007.4l2.2 -3l2.2 3" fill="none" stroke="#333" stroke-width="1.1"/>
<rect x="891.6" y="1004.6" width="14.6" height="14.6" fill="#eef3fa" stroke="#111" stroke-width="1.5"/><rect x="893.0" y="1015.2" width="3" height="3" fill="#4a90e0"/><path d="M894.6 1006.8 v9.6 h8.8" fill="none" stroke="#111" stroke-width="1.3"/><path d="M895.8 1015.2 l1.2 -3.2 l9.4 -8.4 l0.8 0 l0 2.6 l-9 8.2z" fill="#ffd21a" stroke="#c9a010" stroke-width="0.4" stroke-linejoin="round"/><path d="M895.8 1015.2 l1.2 -3.2 l2 1.6z" fill="#d89a5a"/><path d="M895.8 1015.2 l0.5 -1.3 l0.8 0.7z" fill="#222"/>
<path d="M915.2 1007.4 l1.8 -3.1 h7.8 v11.5 l-2.2 3.6 h-7.4z" fill="#eef0f4" stroke="#4a5060" stroke-width="1"/><path d="M915.2 1007.4 l1.8 -3.1 h7.8 v11.5 l-2.2 0 h-7.4z" fill="#a9c4e6" stroke="#1f3f7f" stroke-width="1"/><rect x="915.8" y="1007.2" width="6.2" height="8.2" fill="url(#gBlueT)"/><path d="M922.6 1007.4 v8.4 M915.2 1007.4 h7.4 l2 -3" fill="none" stroke="#1f3f7f" stroke-width="0.7"/><path d="M928.6 1019v-14.4M926.4 1007.4l2.2 -3l2.2 3" fill="none" stroke="#333" stroke-width="1.1"/>
<rect x="939.6" y="1004.6" width="14.6" height="14.6" fill="#eef3fa" stroke="#111" stroke-width="1.5"/><rect x="941.0" y="1015.2" width="3" height="3" fill="#4a90e0"/><path d="M942.6 1006.8 v9.6 h8.8" fill="none" stroke="#111" stroke-width="1.3"/><path d="M943.8 1015.2 l1.2 -3.2 l9.4 -8.4 l0.8 0 l0 2.6 l-9 8.2z" fill="#ffd21a" stroke="#c9a010" stroke-width="0.4" stroke-linejoin="round"/><path d="M943.8 1015.2 l1.2 -3.2 l2 1.6z" fill="#d89a5a"/><path d="M943.8 1015.2 l0.5 -1.3 l0.8 0.7z" fill="#222"/>
<path d="M963.2 1007.4 l1.8 -3.1 h7.8 v11.5 l-2.2 3.6 h-7.4z" fill="#eef0f4" stroke="#4a5060" stroke-width="1"/><path d="M963.2 1007.4 l1.8 -3.1 h7.8 v11.5 l-2.2 0 h-7.4z" fill="#a9c4e6" stroke="#1f3f7f" stroke-width="1"/><rect x="963.8" y="1007.2" width="6.2" height="8.2" fill="url(#gBlueT)"/><path d="M970.6 1007.4 v8.4 M963.2 1007.4 h7.4 l2 -3" fill="none" stroke="#1f3f7f" stroke-width="0.7"/><path d="M976.6 1019v-14.4M974.4 1007.4l2.2 -3l2.2 3" fill="none" stroke="#333" stroke-width="1.1"/>
<rect x="987.6" y="1004.6" width="14.6" height="14.6" fill="#eef3fa" stroke="#111" stroke-width="1.5"/><rect x="989.0" y="1015.2" width="3" height="3" fill="#4a90e0"/><path d="M990.6 1006.8 v9.6 h8.8" fill="none" stroke="#111" stroke-width="1.3"/><path d="M991.8 1015.2 l1.2 -3.2 l9.4 -8.4 l0.8 0 l0 2.6 l-9 8.2z" fill="#ffd21a" stroke="#c9a010" stroke-width="0.4" stroke-linejoin="round"/><path d="M991.8 1015.2 l1.2 -3.2 l2 1.6z" fill="#d89a5a"/><path d="M991.8 1015.2 l0.5 -1.3 l0.8 0.7z" fill="#222"/>
<path d="M1011.2 1007.4 l1.8 -3.1 h7.8 v11.5 l-2.2 3.6 h-7.4z" fill="#eef0f4" stroke="#4a5060" stroke-width="1"/><path d="M1011.2 1007.4 l1.8 -3.1 h7.8 v11.5 l-2.2 0 h-7.4z" fill="#a9c4e6" stroke="#1f3f7f" stroke-width="1"/><rect x="1011.8" y="1007.2" width="6.2" height="8.2" fill="url(#gBlueT)"/><path d="M1018.6 1007.4 v8.4 M1011.2 1007.4 h7.4 l2 -3" fill="none" stroke="#1f3f7f" stroke-width="0.7"/><path d="M1024.6 1019v-14.4M1022.4 1007.4l2.2 -3l2.2 3" fill="none" stroke="#333" stroke-width="1.1"/>
<path d="M1035.2 1007.4 l1.8 -3.1 h7.8 v11.5 l-2.2 3.6 h-7.4z" fill="#eef0f4" stroke="#4a5060" stroke-width="1"/><path d="M1035.2 1007.4 l1.8 -3.1 h7.8 v11.5 l-2.2 0 h-7.4z" fill="#a9c4e6" stroke="#1f3f7f" stroke-width="1"/><rect x="1035.8" y="1007.2" width="6.2" height="8.2" fill="url(#gBlueT)"/><path d="M1042.6 1007.4 v8.4 M1035.2 1007.4 h7.4 l2 -3" fill="none" stroke="#1f3f7f" stroke-width="0.7"/><path d="M1048.6 1019v-14.4M1046.4 1007.4l2.2 -3l2.2 3" fill="none" stroke="#333" stroke-width="1.1"/>
<path d="M1059.2 1007.4 l1.8 -3.1 h7.8 v11.5 l-2.2 3.6 h-7.4z" fill="#eef0f4" stroke="#4a5060" stroke-width="1"/><path d="M1059.2 1007.4 l1.8 -3.1 h7.8 v11.5 l-2.2 0 h-7.4z" fill="#a9c4e6" stroke="#1f3f7f" stroke-width="1"/><rect x="1059.8" y="1007.2" width="6.2" height="8.2" fill="url(#gBlueT)"/><path d="M1066.6 1007.4 v8.4 M1059.2 1007.4 h7.4 l2 -3" fill="none" stroke="#1f3f7f" stroke-width="0.7"/><path d="M1072.6 1019v-14.4M1070.4 1007.4l2.2 -3l2.2 3" fill="none" stroke="#333" stroke-width="1.1"/>
<path d="M1083.2 1007.4 l1.8 -3.1 h7.8 v11.5 l-2.2 3.6 h-7.4z" fill="#eef0f4" stroke="#4a5060" stroke-width="1"/><path d="M1083.2 1007.4 l1.8 -3.1 h7.8 v11.5 l-2.2 0 h-7.4z" fill="#a9c4e6" stroke="#1f3f7f" stroke-width="1"/><rect x="1083.8" y="1007.2" width="6.2" height="8.2" fill="url(#gBlueT)"/><path d="M1090.6 1007.4 v8.4 M1083.2 1007.4 h7.4 l2 -3" fill="none" stroke="#1f3f7f" stroke-width="0.7"/><path d="M1096.6 1019v-14.4M1094.4 1007.4l2.2 -3l2.2 3" fill="none" stroke="#333" stroke-width="1.1"/>
<path d="M1107.2 1007.4 l1.8 -3.1 h7.8 v11.5 l-2.2 3.6 h-7.4z" fill="#eef0f4" stroke="#4a5060" stroke-width="1"/><path d="M1107.2 1007.4 l1.8 -3.1 h7.8 v11.5 l-2.2 0 h-7.4z" fill="#a9c4e6" stroke="#1f3f7f" stroke-width="1"/><rect x="1107.8" y="1007.2" width="6.2" height="8.2" fill="url(#gBlueT)"/><path d="M1114.6 1007.4 v8.4 M1107.2 1007.4 h7.4 l2 -3" fill="none" stroke="#1f3f7f" stroke-width="0.7"/><path d="M1120.6 1019v-14.4M1118.4 1007.4l2.2 -3l2.2 3" fill="none" stroke="#333" stroke-width="1.1"/>
<rect x="1131.6" y="1004.6" width="14.6" height="14.6" fill="#eef3fa" stroke="#111" stroke-width="1.5"/><rect x="1133.0" y="1015.2" width="3" height="3" fill="#4a90e0"/><path d="M1134.6 1006.8 v9.6 h8.8" fill="none" stroke="#111" stroke-width="1.3"/><path d="M1135.8 1015.2 l1.2 -3.2 l9.4 -8.4 l0.8 0 l0 2.6 l-9 8.2z" fill="#ffd21a" stroke="#c9a010" stroke-width="0.4" stroke-linejoin="round"/><path d="M1135.8 1015.2 l1.2 -3.2 l2 1.6z" fill="#d89a5a"/><path d="M1135.8 1015.2 l0.5 -1.3 l0.8 0.7z" fill="#222"/>
<path d="M1155.2 1007.4 l1.8 -3.1 h7.8 v11.5 l-2.2 3.6 h-7.4z" fill="#eef0f4" stroke="#4a5060" stroke-width="1"/><path d="M1155.2 1007.4 l1.8 -3.1 h7.8 v11.5 l-2.2 0 h-7.4z" fill="#a9c4e6" stroke="#1f3f7f" stroke-width="1"/><rect x="1155.8" y="1007.2" width="6.2" height="8.2" fill="url(#gBlueT)"/><path d="M1162.6 1007.4 v8.4 M1155.2 1007.4 h7.4 l2 -3" fill="none" stroke="#1f3f7f" stroke-width="0.7"/><path d="M1168.6 1019v-14.4M1166.4 1007.4l2.2 -3l2.2 3" fill="none" stroke="#333" stroke-width="1.1"/>
<rect x="1179.6" y="1004.6" width="14.6" height="14.6" fill="#eef3fa" stroke="#111" stroke-width="1.5"/><rect x="1181.0" y="1015.2" width="3" height="3" fill="#4a90e0"/><path d="M1182.6 1006.8 v9.6 h8.8" fill="none" stroke="#111" stroke-width="1.3"/><path d="M1183.8 1015.2 l1.2 -3.2 l9.4 -8.4 l0.8 0 l0 2.6 l-9 8.2z" fill="#ffd21a" stroke="#c9a010" stroke-width="0.4" stroke-linejoin="round"/><path d="M1183.8 1015.2 l1.2 -3.2 l2 1.6z" fill="#d89a5a"/><path d="M1183.8 1015.2 l0.5 -1.3 l0.8 0.7z" fill="#222"/>
<path d="M1203.2 1007.4 l1.8 -3.1 h7.8 v11.5 l-2.2 3.6 h-7.4z" fill="#eef0f4" stroke="#4a5060" stroke-width="1"/><path d="M1203.2 1007.4 l1.8 -3.1 h7.8 v11.5 l-2.2 0 h-7.4z" fill="#a9c4e6" stroke="#1f3f7f" stroke-width="1"/><rect x="1203.8" y="1007.2" width="6.2" height="8.2" fill="url(#gBlueT)"/><path d="M1210.6 1007.4 v8.4 M1203.2 1007.4 h7.4 l2 -3" fill="none" stroke="#1f3f7f" stroke-width="0.7"/><path d="M1216.6 1019v-14.4M1214.4 1007.4l2.2 -3l2.2 3" fill="none" stroke="#333" stroke-width="1.1"/>
<path d="M1227.2 1007.4 l1.8 -3.1 h7.8 v11.5 l-2.2 3.6 h-7.4z" fill="#eef0f4" stroke="#4a5060" stroke-width="1"/><path d="M1227.2 1007.4 l1.8 -3.1 h7.8 v11.5 l-2.2 0 h-7.4z" fill="#a9c4e6" stroke="#1f3f7f" stroke-width="1"/><rect x="1227.8" y="1007.2" width="6.2" height="8.2" fill="url(#gBlueT)"/><path d="M1234.6 1007.4 v8.4 M1227.2 1007.4 h7.4 l2 -3" fill="none" stroke="#1f3f7f" stroke-width="0.7"/><path d="M1240.6 1019v-14.4M1238.4 1007.4l2.2 -3l2.2 3" fill="none" stroke="#333" stroke-width="1.1"/>
<rect x="1251.6" y="1004.6" width="14.6" height="14.6" fill="#eef3fa" stroke="#111" stroke-width="1.5"/><rect x="1253.0" y="1015.2" width="3" height="3" fill="#4a90e0"/><path d="M1254.6 1006.8 v9.6 h8.8" fill="none" stroke="#111" stroke-width="1.3"/><path d="M1255.8 1015.2 l1.2 -3.2 l9.4 -8.4 l0.8 0 l0 2.6 l-9 8.2z" fill="#ffd21a" stroke="#c9a010" stroke-width="0.4" stroke-linejoin="round"/><path d="M1255.8 1015.2 l1.2 -3.2 l2 1.6z" fill="#d89a5a"/><path d="M1255.8 1015.2 l0.5 -1.3 l0.8 0.7z" fill="#222"/>
<path d="M1275.2 1007.4 l1.8 -3.1 h7.8 v11.5 l-2.2 3.6 h-7.4z" fill="#eef0f4" stroke="#4a5060" stroke-width="1"/><path d="M1275.2 1007.4 l1.8 -3.1 h7.8 v11.5 l-2.2 0 h-7.4z" fill="#a9c4e6" stroke="#1f3f7f" stroke-width="1"/><rect x="1275.8" y="1007.2" width="6.2" height="8.2" fill="url(#gBlueT)"/><path d="M1282.6 1007.4 v8.4 M1275.2 1007.4 h7.4 l2 -3" fill="none" stroke="#1f3f7f" stroke-width="0.7"/><path d="M1288.6 1019v-14.4M1286.4 1007.4l2.2 -3l2.2 3" fill="none" stroke="#333" stroke-width="1.1"/>
</g>
<path d="M155.5 1022.4v6M179.5 1022.4v6M203.5 1022.4v6M227.5 1022.4v6M251.5 1022.4v6M275.5 1022.4v6M299.5 1022.4v6M323.5 1022.4v6M347.5 1022.4v6M371.5 1022.4v6M395.5 1022.4v6M419.5 1022.4v6M443.5 1022.4v6M467.5 1022.4v6M491.5 1022.4v6M515.5 1022.4v6M539.5 1022.4v6M563.5 1022.4v6M587.5 1022.4v6M611.5 1022.4v6M635.5 1022.4v6M659.5 1022.4v6M683.5 1022.4v6M707.5 1022.4v6M731.5 1022.4v6M755.5 1022.4v6M779.5 1022.4v6M803.5 1022.4v6M827.5 1022.4v6M851.5 1022.4v6M875.5 1022.4v6M899.5 1022.4v6M923.5 1022.4v6M947.5 1022.4v6M971.5 1022.4v6M995.5 1022.4v6M1019.5 1022.4v6M1043.5 1022.4v6M1067.5 1022.4v6M1091.5 1022.4v6M1115.5 1022.4v6M1139.5 1022.4v6M1163.5 1022.4v6M1187.5 1022.4v6M1211.5 1022.4v6M1235.5 1022.4v6M1259.5 1022.4v6M1283.5 1022.4v6 M149 1029.1H1284" stroke="#cfcfcf" stroke-width="2" fill="none"/>
<path d="M141 1029.1h3M145.5 1029.1h3" stroke="#fff" stroke-width="1.6"/>
<path d="M1289.4 1002h11.4l-5.7 6z" fill="#555"/><rect x="1294.1" y="1002" width="2.1" height="28" fill="#555"/>
<path d="M1341.91 1015.58L1343.90 1015.75L1343.90 1018.25L1341.91 1018.42L1341.18 1020.18L1342.47 1021.70L1340.70 1023.47L1339.18 1022.18L1337.42 1022.91L1337.25 1024.90L1334.75 1024.90L1334.58 1022.91L1332.82 1022.18L1331.30 1023.47L1329.53 1021.70L1330.82 1020.18L1330.09 1018.42L1328.10 1018.25L1328.10 1015.75L1330.09 1015.58L1330.82 1013.82L1329.53 1012.30L1331.30 1010.53L1332.82 1011.82L1334.58 1011.09L1334.75 1009.10L1337.25 1009.10L1337.42 1011.09L1339.18 1011.82L1340.70 1010.53L1342.47 1012.30L1341.18 1013.82Z" fill="#555"/><circle cx="1336.0" cy="1017.0" r="3.36" fill="#f3f3f3"/><circle cx="1336.0" cy="1017.0" r="1.85" fill="#555"/>
</svg>
<div class="abs" style="left:0;top:0;width:1354px;height:1px;background:#1f1f1f"></div>
<div class="abs" style="left:0;top:0;width:1px;height:1038px;background:#1f1f1f"></div>
<div class="abs" style="left:1353px;top:0;width:1px;height:1030px;background:#1f1f1f"></div>
</body></html>
